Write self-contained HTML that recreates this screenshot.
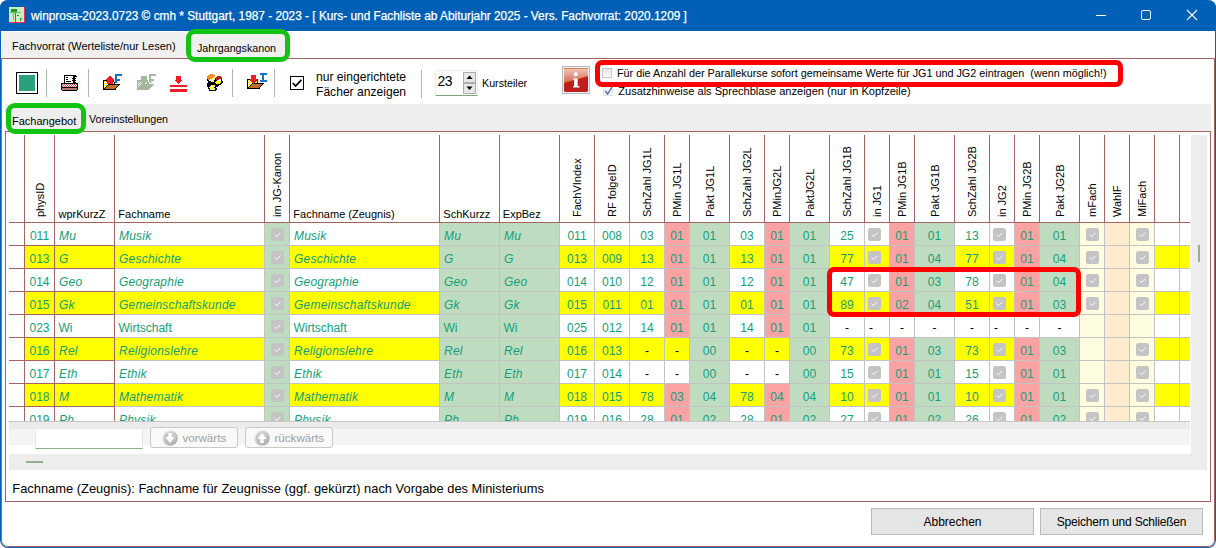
<!DOCTYPE html><html><head><meta charset="utf-8"><style>
*{margin:0;padding:0;box-sizing:border-box}
html,body{width:1216px;height:548px;overflow:hidden;background:#fff;font-family:"Liberation Sans",sans-serif}
.a{position:absolute}
.t{position:absolute;white-space:nowrap;line-height:0}
.t span{display:inline-block;line-height:normal;transform:translateY(-0.905em)}
.vt{position:absolute;white-space:nowrap;transform-origin:0 0;transform:rotate(-90deg);line-height:1;font-size:11px}
</style></head><body><div class="a" style="left:0;top:0;width:1216px;height:548px;border:1px solid #0060b8;border-top:0;border-radius:8px;background:#fff"></div>
<div class="a" style="left:0;top:0;width:1216px;height:31px;background:#0060b8;border-radius:8px 8px 0 0"></div>
<svg class="a" style="left:9px;top:7px" width="16" height="16" viewBox="0 0 16 16" shape-rendering="crispEdges"><rect x="0" y="0" width="15" height="1" fill="#cdeec4"/><rect x="15" y="0" width="1" height="1" fill="#e83050"/><rect x="0" y="1" width="15" height="1" fill="#cdeec4"/><rect x="15" y="1" width="1" height="1" fill="#e83050"/><rect x="0" y="2" width="2" height="1" fill="#cdeec4"/><rect x="2" y="2" width="6" height="1" fill="#1f9a2a"/><rect x="8" y="2" width="7" height="1" fill="#cdeec4"/><rect x="15" y="2" width="1" height="1" fill="#e83050"/><rect x="0" y="3" width="2" height="1" fill="#cdeec4"/><rect x="2" y="3" width="6" height="1" fill="#1f9a2a"/><rect x="8" y="3" width="7" height="1" fill="#cdeec4"/><rect x="15" y="3" width="1" height="1" fill="#e83050"/><rect x="0" y="4" width="2" height="1" fill="#cdeec4"/><rect x="2" y="4" width="6" height="1" fill="#1f9a2a"/><rect x="8" y="4" width="7" height="1" fill="#cdeec4"/><rect x="15" y="4" width="1" height="1" fill="#e83050"/><rect x="0" y="5" width="1" height="1" fill="#cdeec4"/><rect x="1" y="5" width="11" height="1" fill="#6cc06a"/><rect x="12" y="5" width="3" height="1" fill="#cdeec4"/><rect x="15" y="5" width="1" height="1" fill="#e83050"/><rect x="0" y="6" width="4" height="1" fill="#cdeec4"/><rect x="4" y="6" width="1" height="1" fill="#6cc06a"/><rect x="5" y="6" width="1" height="1" fill="#cdeec4"/><rect x="6" y="6" width="1" height="1" fill="#1f9a2a"/><rect x="7" y="6" width="8" height="1" fill="#cdeec4"/><rect x="15" y="6" width="1" height="1" fill="#e83050"/><rect x="0" y="7" width="4" height="1" fill="#cdeec4"/><rect x="4" y="7" width="1" height="1" fill="#6cc06a"/><rect x="5" y="7" width="1" height="1" fill="#cdeec4"/><rect x="6" y="7" width="1" height="1" fill="#1f9a2a"/><rect x="7" y="7" width="8" height="1" fill="#cdeec4"/><rect x="15" y="7" width="1" height="1" fill="#e83050"/><rect x="0" y="8" width="4" height="1" fill="#cdeec4"/><rect x="4" y="8" width="1" height="1" fill="#6cc06a"/><rect x="5" y="8" width="1" height="1" fill="#cdeec4"/><rect x="6" y="8" width="1" height="1" fill="#1f9a2a"/><rect x="7" y="8" width="1" height="1" fill="#cdeec4"/><rect x="8" y="8" width="2" height="1" fill="#1f9a2a"/><rect x="10" y="8" width="5" height="1" fill="#cdeec4"/><rect x="15" y="8" width="1" height="1" fill="#e83050"/><rect x="0" y="9" width="4" height="1" fill="#cdeec4"/><rect x="4" y="9" width="1" height="1" fill="#6cc06a"/><rect x="5" y="9" width="1" height="1" fill="#cdeec4"/><rect x="6" y="9" width="1" height="1" fill="#1f9a2a"/><rect x="7" y="9" width="8" height="1" fill="#cdeec4"/><rect x="15" y="9" width="1" height="1" fill="#e83050"/><rect x="0" y="10" width="4" height="1" fill="#cdeec4"/><rect x="4" y="10" width="1" height="1" fill="#6cc06a"/><rect x="5" y="10" width="1" height="1" fill="#cdeec4"/><rect x="6" y="10" width="1" height="1" fill="#1f9a2a"/><rect x="7" y="10" width="8" height="1" fill="#cdeec4"/><rect x="15" y="10" width="1" height="1" fill="#e83050"/><rect x="0" y="11" width="4" height="1" fill="#cdeec4"/><rect x="4" y="11" width="1" height="1" fill="#6cc06a"/><rect x="5" y="11" width="1" height="1" fill="#cdeec4"/><rect x="6" y="11" width="1" height="1" fill="#1f9a2a"/><rect x="7" y="11" width="4" height="1" fill="#cdeec4"/><rect x="11" y="11" width="2" height="1" fill="#1f9a2a"/><rect x="13" y="11" width="2" height="1" fill="#cdeec4"/><rect x="15" y="11" width="1" height="1" fill="#e83050"/><rect x="0" y="12" width="4" height="1" fill="#cdeec4"/><rect x="4" y="12" width="1" height="1" fill="#6cc06a"/><rect x="5" y="12" width="1" height="1" fill="#cdeec4"/><rect x="6" y="12" width="1" height="1" fill="#1f9a2a"/><rect x="7" y="12" width="4" height="1" fill="#cdeec4"/><rect x="11" y="12" width="1" height="1" fill="#1f9a2a"/><rect x="12" y="12" width="3" height="1" fill="#cdeec4"/><rect x="15" y="12" width="1" height="1" fill="#e83050"/><rect x="0" y="13" width="6" height="1" fill="#cdeec4"/><rect x="6" y="13" width="1" height="1" fill="#1f9a2a"/><rect x="7" y="13" width="4" height="1" fill="#cdeec4"/><rect x="11" y="13" width="1" height="1" fill="#1f9a2a"/><rect x="12" y="13" width="3" height="1" fill="#cdeec4"/><rect x="15" y="13" width="1" height="1" fill="#e83050"/><rect x="0" y="14" width="6" height="1" fill="#cdeec4"/><rect x="6" y="14" width="1" height="1" fill="#1f9a2a"/><rect x="7" y="14" width="8" height="1" fill="#cdeec4"/><rect x="15" y="14" width="1" height="1" fill="#e83050"/><rect x="0" y="15" width="16" height="1" fill="#e83050"/></svg>
<div class="t" style="left:31px;top:20px;font-size:11.85px;color:#fff;-webkit-text-stroke:0.25px #fff"><span>winprosa-2023.0723 © cmh * Stuttgart, 1987 - 2023 - [ Kurs- und Fachliste ab Abiturjahr 2025 - Vers. Fachvorrat: 2020.1209 ]</span></div>
<div class="a" style="left:1096px;top:15px;width:10px;height:1px;background:#fff;"></div>
<div class="a" style="left:1141px;top:10px;width:10px;height:10px;border:1px solid #fff;border-radius:2px"></div>
<svg class="a" style="left:1186px;top:9px" width="12" height="12" viewBox="0 0 12 12"><path d="M1 1 L11 11 M11 1 L1 11" stroke="#fff" stroke-width="1.1"/></svg>
<div class="a" style="left:2px;top:32px;width:184px;height:26px;background:#f0f0f0;"></div>
<div class="t" style="left:12px;top:50px;font-size:11px;color:#000;"><span>Fachvorrat (Werteliste/nur Lesen)</span></div>
<div class="a" style="left:191px;top:34px;width:94px;height:23px;background:#f0f0f0;border-radius:4px"></div>
<div class="t" style="left:197px;top:52px;font-size:10.7px;color:#000;"><span>Jahrgangskanon</span></div>
<div class="a" style="left:1px;top:58px;width:1214px;height:489px;border:1px solid #a5645f;border-radius:0 0 7px 7px"></div>
<div class="a" style="left:16px;top:72px;width:22px;height:22px;border:1.5px solid #000;background:#fff"></div>
<div class="a" style="left:19px;top:75px;width:16px;height:16px;background:#2ba07e;"></div>
<div class="a" style="left:46px;top:69px;width:1px;height:28px;background:#a9bba6;"></div>
<div class="a" style="left:88px;top:69px;width:1px;height:28px;background:#a9bba6;"></div>
<div class="a" style="left:232px;top:69px;width:1px;height:28px;background:#a9bba6;"></div>
<div class="a" style="left:274px;top:69px;width:1px;height:28px;background:#a9bba6;"></div>
<div class="a" style="left:421px;top:70px;width:1px;height:28px;background:#a9bba6;"></div>
<svg class="a" style="left:58px;top:72px" width="22" height="19" viewBox="0 0 22 19" shape-rendering="crispEdges"><rect x="6" y="3" width="12" height="1" fill="#000000"/><rect x="6" y="4" width="1" height="1" fill="#000000"/><rect x="7" y="4" width="8" height="1" fill="#ffffff"/><rect x="15" y="4" width="4" height="1" fill="#000000"/><rect x="6" y="5" width="1" height="1" fill="#000000"/><rect x="7" y="5" width="1" height="1" fill="#ffffff"/><rect x="8" y="5" width="2" height="1" fill="#000000"/><rect x="10" y="5" width="3" height="1" fill="#ffffff"/><rect x="13" y="5" width="1" height="1" fill="#e8c8c0"/><rect x="14" y="5" width="1" height="1" fill="#ffffff"/><rect x="15" y="5" width="2" height="1" fill="#000000"/><rect x="6" y="6" width="1" height="1" fill="#000000"/><rect x="7" y="6" width="7" height="1" fill="#ffffff"/><rect x="14" y="6" width="4" height="1" fill="#000000"/><rect x="6" y="7" width="1" height="1" fill="#000000"/><rect x="7" y="7" width="1" height="1" fill="#ffffff"/><rect x="8" y="7" width="2" height="1" fill="#000000"/><rect x="10" y="7" width="5" height="1" fill="#ffffff"/><rect x="15" y="7" width="2" height="1" fill="#000000"/><rect x="6" y="8" width="1" height="1" fill="#000000"/><rect x="7" y="8" width="7" height="1" fill="#ffffff"/><rect x="14" y="8" width="4" height="1" fill="#000000"/><rect x="6" y="9" width="1" height="1" fill="#000000"/><rect x="7" y="9" width="1" height="1" fill="#ffffff"/><rect x="8" y="9" width="5" height="1" fill="#000000"/><rect x="13" y="9" width="2" height="1" fill="#ffffff"/><rect x="15" y="9" width="2" height="1" fill="#000000"/><rect x="6" y="10" width="1" height="1" fill="#000000"/><rect x="7" y="10" width="8" height="1" fill="#ffffff"/><rect x="15" y="10" width="3" height="1" fill="#000000"/><rect x="3" y="11" width="17" height="1" fill="#000000"/><rect x="3" y="12" width="1" height="1" fill="#000000"/><rect x="4" y="12" width="1" height="1" fill="#c8504a"/><rect x="5" y="12" width="1" height="1" fill="#ffffff"/><rect x="6" y="12" width="1" height="1" fill="#c8504a"/><rect x="7" y="12" width="1" height="1" fill="#ffffff"/><rect x="8" y="12" width="1" height="1" fill="#c8504a"/><rect x="9" y="12" width="1" height="1" fill="#ffffff"/><rect x="10" y="12" width="1" height="1" fill="#c8504a"/><rect x="11" y="12" width="1" height="1" fill="#ffffff"/><rect x="12" y="12" width="1" height="1" fill="#c8504a"/><rect x="13" y="12" width="1" height="1" fill="#ffffff"/><rect x="14" y="12" width="1" height="1" fill="#c8504a"/><rect x="15" y="12" width="1" height="1" fill="#ffffff"/><rect x="16" y="12" width="1" height="1" fill="#c8504a"/><rect x="17" y="12" width="1" height="1" fill="#ffffff"/><rect x="18" y="12" width="1" height="1" fill="#c8504a"/><rect x="19" y="12" width="1" height="1" fill="#000000"/><rect x="3" y="13" width="1" height="1" fill="#000000"/><rect x="4" y="13" width="1" height="1" fill="#ffffff"/><rect x="5" y="13" width="1" height="1" fill="#c8504a"/><rect x="6" y="13" width="1" height="1" fill="#ffffff"/><rect x="7" y="13" width="1" height="1" fill="#c8504a"/><rect x="8" y="13" width="1" height="1" fill="#ffffff"/><rect x="9" y="13" width="1" height="1" fill="#c8504a"/><rect x="10" y="13" width="1" height="1" fill="#ffffff"/><rect x="11" y="13" width="1" height="1" fill="#c8504a"/><rect x="12" y="13" width="1" height="1" fill="#ffffff"/><rect x="13" y="13" width="1" height="1" fill="#c8504a"/><rect x="14" y="13" width="1" height="1" fill="#ffffff"/><rect x="15" y="13" width="1" height="1" fill="#c8504a"/><rect x="16" y="13" width="1" height="1" fill="#ffffff"/><rect x="17" y="13" width="1" height="1" fill="#ee1c24"/><rect x="18" y="13" width="1" height="1" fill="#ffffff"/><rect x="19" y="13" width="1" height="1" fill="#000000"/><rect x="3" y="14" width="1" height="1" fill="#000000"/><rect x="4" y="14" width="1" height="1" fill="#c8504a"/><rect x="5" y="14" width="1" height="1" fill="#ffffff"/><rect x="6" y="14" width="1" height="1" fill="#c8504a"/><rect x="7" y="14" width="1" height="1" fill="#ffffff"/><rect x="8" y="14" width="1" height="1" fill="#c8504a"/><rect x="9" y="14" width="1" height="1" fill="#ffffff"/><rect x="10" y="14" width="1" height="1" fill="#c8504a"/><rect x="11" y="14" width="1" height="1" fill="#ffffff"/><rect x="12" y="14" width="1" height="1" fill="#c8504a"/><rect x="13" y="14" width="1" height="1" fill="#ffffff"/><rect x="14" y="14" width="1" height="1" fill="#c8504a"/><rect x="15" y="14" width="1" height="1" fill="#ffffff"/><rect x="16" y="14" width="1" height="1" fill="#c8504a"/><rect x="17" y="14" width="1" height="1" fill="#ffffff"/><rect x="18" y="14" width="1" height="1" fill="#c8504a"/><rect x="19" y="14" width="1" height="1" fill="#000000"/><rect x="3" y="15" width="17" height="1" fill="#000000"/><rect x="3" y="16" width="1" height="1" fill="#000000"/><rect x="4" y="16" width="15" height="1" fill="#b8756b"/><rect x="19" y="16" width="1" height="1" fill="#000000"/><rect x="3" y="17" width="1" height="1" fill="#000000"/><rect x="4" y="17" width="15" height="1" fill="#b8756b"/><rect x="19" y="17" width="1" height="1" fill="#000000"/><rect x="4" y="18" width="15" height="1" fill="#000000"/></svg>
<svg class="a" style="left:100px;top:70px" width="24" height="20" viewBox="0 0 24 20" shape-rendering="crispEdges"><rect x="15" y="4" width="7" height="1" fill="#1c6cd0"/><rect x="15" y="5" width="7" height="1" fill="#1c6cd0"/><rect x="9" y="6" width="2" height="1" fill="#ee1c24"/><rect x="15" y="6" width="2" height="1" fill="#1c6cd0"/><rect x="8" y="7" width="4" height="1" fill="#ee1c24"/><rect x="15" y="7" width="2" height="1" fill="#1c6cd0"/><rect x="7" y="8" width="6" height="1" fill="#ee1c24"/><rect x="15" y="8" width="2" height="1" fill="#1c6cd0"/><rect x="6" y="9" width="8" height="1" fill="#ee1c24"/><rect x="15" y="9" width="5" height="1" fill="#1c6cd0"/><rect x="3" y="10" width="4" height="1" fill="#000000"/><rect x="7" y="10" width="6" height="1" fill="#ee1c24"/><rect x="13" y="10" width="1" height="1" fill="#000000"/><rect x="15" y="10" width="5" height="1" fill="#1c6cd0"/><rect x="3" y="11" width="1" height="1" fill="#000000"/><rect x="4" y="11" width="1" height="1" fill="#ffff00"/><rect x="5" y="11" width="1" height="1" fill="#ffffff"/><rect x="6" y="11" width="7" height="1" fill="#ee1c24"/><rect x="13" y="11" width="1" height="1" fill="#000000"/><rect x="15" y="11" width="2" height="1" fill="#1c6cd0"/><rect x="3" y="12" width="1" height="1" fill="#000000"/><rect x="4" y="12" width="1" height="1" fill="#ffffff"/><rect x="5" y="12" width="1" height="1" fill="#ffff00"/><rect x="6" y="12" width="1" height="1" fill="#ffffff"/><rect x="7" y="12" width="6" height="1" fill="#ee1c24"/><rect x="13" y="12" width="1" height="1" fill="#ffff00"/><rect x="14" y="12" width="1" height="1" fill="#000000"/><rect x="15" y="12" width="2" height="1" fill="#1c6cd0"/><rect x="3" y="13" width="1" height="1" fill="#000000"/><rect x="4" y="13" width="1" height="1" fill="#ffff00"/><rect x="5" y="13" width="1" height="1" fill="#ffffff"/><rect x="6" y="13" width="1" height="1" fill="#ffff00"/><rect x="7" y="13" width="6" height="1" fill="#ee1c24"/><rect x="13" y="13" width="1" height="1" fill="#ffffff"/><rect x="14" y="13" width="1" height="1" fill="#000000"/><rect x="3" y="14" width="1" height="1" fill="#000000"/><rect x="4" y="14" width="1" height="1" fill="#ffffff"/><rect x="5" y="14" width="1" height="1" fill="#ffff00"/><rect x="6" y="14" width="1" height="1" fill="#ffffff"/><rect x="7" y="14" width="1" height="1" fill="#ffff00"/><rect x="8" y="14" width="12" height="1" fill="#000000"/><rect x="3" y="15" width="1" height="1" fill="#000000"/><rect x="4" y="15" width="1" height="1" fill="#ffff00"/><rect x="5" y="15" width="1" height="1" fill="#ffffff"/><rect x="6" y="15" width="1" height="1" fill="#ffff00"/><rect x="7" y="15" width="1" height="1" fill="#000000"/><rect x="8" y="15" width="10" height="1" fill="#c0702a"/><rect x="18" y="15" width="1" height="1" fill="#000000"/><rect x="3" y="16" width="1" height="1" fill="#000000"/><rect x="4" y="16" width="1" height="1" fill="#ffffff"/><rect x="5" y="16" width="1" height="1" fill="#ffff00"/><rect x="6" y="16" width="1" height="1" fill="#000000"/><rect x="7" y="16" width="10" height="1" fill="#c0702a"/><rect x="17" y="16" width="1" height="1" fill="#000000"/><rect x="3" y="17" width="1" height="1" fill="#000000"/><rect x="4" y="17" width="1" height="1" fill="#ffff00"/><rect x="5" y="17" width="1" height="1" fill="#000000"/><rect x="6" y="17" width="10" height="1" fill="#c0702a"/><rect x="16" y="17" width="1" height="1" fill="#000000"/><rect x="3" y="18" width="2" height="1" fill="#000000"/><rect x="5" y="18" width="10" height="1" fill="#c0702a"/><rect x="15" y="18" width="1" height="1" fill="#000000"/><rect x="3" y="19" width="13" height="1" fill="#000000"/></svg>
<svg class="a" style="left:134px;top:70px" width="24" height="20" viewBox="0 0 24 20" shape-rendering="crispEdges"><rect x="15" y="4" width="7" height="1" fill="#a3b89d"/><rect x="15" y="5" width="7" height="1" fill="#a3b89d"/><rect x="7" y="6" width="6" height="1" fill="#a3b89d"/><rect x="15" y="6" width="2" height="1" fill="#a3b89d"/><rect x="7" y="7" width="6" height="1" fill="#a3b89d"/><rect x="15" y="7" width="2" height="1" fill="#a3b89d"/><rect x="7" y="8" width="6" height="1" fill="#a3b89d"/><rect x="15" y="8" width="2" height="1" fill="#a3b89d"/><rect x="7" y="9" width="6" height="1" fill="#a3b89d"/><rect x="15" y="9" width="5" height="1" fill="#a3b89d"/><rect x="3" y="10" width="11" height="1" fill="#a3b89d"/><rect x="15" y="10" width="5" height="1" fill="#a3b89d"/><rect x="3" y="11" width="11" height="1" fill="#a3b89d"/><rect x="15" y="11" width="2" height="1" fill="#a3b89d"/><rect x="3" y="12" width="1" height="1" fill="#a3b89d"/><rect x="4" y="12" width="1" height="1" fill="#ffffff"/><rect x="5" y="12" width="1" height="1" fill="#a3b89d"/><rect x="6" y="12" width="1" height="1" fill="#ffffff"/><rect x="7" y="12" width="5" height="1" fill="#a3b89d"/><rect x="12" y="12" width="1" height="1" fill="#ffffff"/><rect x="13" y="12" width="2" height="1" fill="#a3b89d"/><rect x="16" y="12" width="2" height="1" fill="#a3b89d"/><rect x="3" y="13" width="2" height="1" fill="#a3b89d"/><rect x="5" y="13" width="1" height="1" fill="#ffffff"/><rect x="6" y="13" width="1" height="1" fill="#a3b89d"/><rect x="7" y="13" width="1" height="1" fill="#ffffff"/><rect x="8" y="13" width="3" height="1" fill="#a3b89d"/><rect x="11" y="13" width="1" height="1" fill="#ffffff"/><rect x="12" y="13" width="3" height="1" fill="#a3b89d"/><rect x="3" y="14" width="1" height="1" fill="#a3b89d"/><rect x="4" y="14" width="1" height="1" fill="#ffffff"/><rect x="5" y="14" width="1" height="1" fill="#a3b89d"/><rect x="6" y="14" width="1" height="1" fill="#ffffff"/><rect x="7" y="14" width="13" height="1" fill="#a3b89d"/><rect x="3" y="15" width="2" height="1" fill="#a3b89d"/><rect x="5" y="15" width="1" height="1" fill="#ffffff"/><rect x="6" y="15" width="13" height="1" fill="#a3b89d"/><rect x="3" y="16" width="1" height="1" fill="#a3b89d"/><rect x="4" y="16" width="1" height="1" fill="#ffffff"/><rect x="5" y="16" width="13" height="1" fill="#a3b89d"/><rect x="3" y="17" width="14" height="1" fill="#a3b89d"/><rect x="3" y="18" width="13" height="1" fill="#a3b89d"/><rect x="3" y="19" width="12" height="1" fill="#a3b89d"/></svg>
<svg class="a" style="left:166px;top:72px" width="22" height="20" viewBox="0 0 22 20" shape-rendering="crispEdges"><rect x="10" y="4" width="5" height="1" fill="#ee1c24"/><rect x="10" y="5" width="5" height="1" fill="#ee1c24"/><rect x="10" y="6" width="5" height="1" fill="#ee1c24"/><rect x="10" y="7" width="5" height="1" fill="#ee1c24"/><rect x="9" y="8" width="7" height="1" fill="#ee1c24"/><rect x="10" y="9" width="5" height="1" fill="#ee1c24"/><rect x="11" y="10" width="3" height="1" fill="#ee1c24"/><rect x="12" y="11" width="1" height="1" fill="#ee1c24"/><rect x="4" y="13" width="17" height="1" fill="#ee1c24"/><rect x="4" y="14" width="17" height="1" fill="#ee1c24"/><rect x="4" y="17" width="17" height="1" fill="#ee1c24"/><rect x="4" y="18" width="17" height="1" fill="#ee1c24"/><rect x="4" y="19" width="17" height="1" fill="#ee1c24"/></svg>
<svg class="a" style="left:202px;top:70px" width="22" height="21" viewBox="0 0 22 21" shape-rendering="crispEdges"><rect x="8" y="4" width="4" height="1" fill="#f7901e"/><rect x="6" y="5" width="7" height="1" fill="#f7901e"/><rect x="5" y="6" width="8" height="1" fill="#f7901e"/><rect x="15" y="6" width="4" height="1" fill="#b8201c"/><rect x="5" y="7" width="6" height="1" fill="#f7901e"/><rect x="11" y="7" width="1" height="1" fill="#ffff00"/><rect x="12" y="7" width="1" height="1" fill="#ffffff"/><rect x="14" y="7" width="6" height="1" fill="#b8201c"/><rect x="5" y="8" width="5" height="1" fill="#f7901e"/><rect x="10" y="8" width="1" height="1" fill="#ffff00"/><rect x="11" y="8" width="1" height="1" fill="#ffffff"/><rect x="12" y="8" width="1" height="1" fill="#ffff00"/><rect x="13" y="8" width="1" height="1" fill="#000000"/><rect x="14" y="8" width="6" height="1" fill="#b8201c"/><rect x="5" y="9" width="1" height="1" fill="#000000"/><rect x="6" y="9" width="2" height="1" fill="#f7901e"/><rect x="8" y="9" width="1" height="1" fill="#ffffff"/><rect x="9" y="9" width="1" height="1" fill="#ffff00"/><rect x="10" y="9" width="1" height="1" fill="#ffffff"/><rect x="11" y="9" width="1" height="1" fill="#ffff00"/><rect x="12" y="9" width="1" height="1" fill="#ffffff"/><rect x="13" y="9" width="1" height="1" fill="#000000"/><rect x="14" y="9" width="3" height="1" fill="#b8201c"/><rect x="17" y="9" width="1" height="1" fill="#ffff00"/><rect x="18" y="9" width="1" height="1" fill="#ffffff"/><rect x="19" y="9" width="1" height="1" fill="#000000"/><rect x="5" y="10" width="2" height="1" fill="#000000"/><rect x="7" y="10" width="1" height="1" fill="#ffff00"/><rect x="8" y="10" width="1" height="1" fill="#ffffff"/><rect x="9" y="10" width="1" height="1" fill="#ffff00"/><rect x="10" y="10" width="1" height="1" fill="#ffffff"/><rect x="11" y="10" width="1" height="1" fill="#ffff00"/><rect x="12" y="10" width="3" height="1" fill="#000000"/><rect x="15" y="10" width="1" height="1" fill="#ffff00"/><rect x="16" y="10" width="1" height="1" fill="#ffffff"/><rect x="17" y="10" width="1" height="1" fill="#ffff00"/><rect x="18" y="10" width="1" height="1" fill="#ffffff"/><rect x="19" y="10" width="1" height="1" fill="#000000"/><rect x="6" y="11" width="3" height="1" fill="#000000"/><rect x="9" y="11" width="1" height="1" fill="#ffffff"/><rect x="10" y="11" width="1" height="1" fill="#ffff00"/><rect x="11" y="11" width="1" height="1" fill="#ffffff"/><rect x="12" y="11" width="2" height="1" fill="#000000"/><rect x="14" y="11" width="1" height="1" fill="#ffff00"/><rect x="15" y="11" width="1" height="1" fill="#ffffff"/><rect x="16" y="11" width="1" height="1" fill="#ffff00"/><rect x="17" y="11" width="1" height="1" fill="#ffffff"/><rect x="18" y="11" width="1" height="1" fill="#ffff00"/><rect x="19" y="11" width="2" height="1" fill="#000000"/><rect x="6" y="12" width="7" height="1" fill="#000000"/><rect x="13" y="12" width="1" height="1" fill="#ffffff"/><rect x="14" y="12" width="1" height="1" fill="#ffff00"/><rect x="15" y="12" width="1" height="1" fill="#ffffff"/><rect x="16" y="12" width="1" height="1" fill="#ffff00"/><rect x="17" y="12" width="1" height="1" fill="#ffffff"/><rect x="18" y="12" width="1" height="1" fill="#ffff00"/><rect x="19" y="12" width="2" height="1" fill="#000000"/><rect x="5" y="13" width="9" height="1" fill="#000000"/><rect x="14" y="13" width="1" height="1" fill="#ffff00"/><rect x="15" y="13" width="1" height="1" fill="#ffffff"/><rect x="16" y="13" width="1" height="1" fill="#ffff00"/><rect x="17" y="13" width="1" height="1" fill="#ffffff"/><rect x="18" y="13" width="2" height="1" fill="#000000"/><rect x="5" y="14" width="14" height="1" fill="#000000"/><rect x="5" y="15" width="4" height="1" fill="#000000"/><rect x="9" y="15" width="1" height="1" fill="#ffffff"/><rect x="10" y="15" width="1" height="1" fill="#ffff00"/><rect x="11" y="15" width="1" height="1" fill="#ffffff"/><rect x="12" y="15" width="1" height="1" fill="#ffff00"/><rect x="13" y="15" width="4" height="1" fill="#000000"/><rect x="5" y="16" width="3" height="1" fill="#000000"/><rect x="8" y="16" width="1" height="1" fill="#ffffff"/><rect x="9" y="16" width="1" height="1" fill="#ffff00"/><rect x="10" y="16" width="1" height="1" fill="#ffffff"/><rect x="11" y="16" width="1" height="1" fill="#ffff00"/><rect x="12" y="16" width="1" height="1" fill="#ffffff"/><rect x="13" y="16" width="3" height="1" fill="#000000"/><rect x="6" y="17" width="1" height="1" fill="#000000"/><rect x="7" y="17" width="1" height="1" fill="#ffffff"/><rect x="8" y="17" width="1" height="1" fill="#ffff00"/><rect x="9" y="17" width="1" height="1" fill="#ffffff"/><rect x="10" y="17" width="1" height="1" fill="#ffff00"/><rect x="11" y="17" width="1" height="1" fill="#ffffff"/><rect x="12" y="17" width="2" height="1" fill="#000000"/><rect x="6" y="18" width="2" height="1" fill="#000000"/><rect x="8" y="18" width="1" height="1" fill="#ffff00"/><rect x="9" y="18" width="1" height="1" fill="#ffffff"/><rect x="10" y="18" width="1" height="1" fill="#ffff00"/><rect x="11" y="18" width="1" height="1" fill="#ffffff"/><rect x="12" y="18" width="1" height="1" fill="#ffff00"/><rect x="13" y="18" width="2" height="1" fill="#000000"/><rect x="7" y="19" width="1" height="1" fill="#000000"/><rect x="8" y="19" width="1" height="1" fill="#ffffff"/><rect x="9" y="19" width="1" height="1" fill="#ffff00"/><rect x="10" y="19" width="1" height="1" fill="#ffffff"/><rect x="11" y="19" width="1" height="1" fill="#ffff00"/><rect x="12" y="19" width="1" height="1" fill="#ffffff"/><rect x="13" y="19" width="2" height="1" fill="#000000"/><rect x="7" y="20" width="7" height="1" fill="#000000"/></svg>
<svg class="a" style="left:244px;top:68px" width="26" height="21" viewBox="0 0 26 21" shape-rendering="crispEdges"><rect x="16" y="5" width="7" height="1" fill="#1c6cd0"/><rect x="16" y="6" width="7" height="1" fill="#1c6cd0"/><rect x="7" y="7" width="5" height="1" fill="#ee1c24"/><rect x="18" y="7" width="2" height="1" fill="#1c6cd0"/><rect x="7" y="8" width="5" height="1" fill="#ee1c24"/><rect x="18" y="8" width="2" height="1" fill="#1c6cd0"/><rect x="7" y="9" width="5" height="1" fill="#ee1c24"/><rect x="18" y="9" width="2" height="1" fill="#1c6cd0"/><rect x="7" y="10" width="5" height="1" fill="#ee1c24"/><rect x="18" y="10" width="2" height="1" fill="#1c6cd0"/><rect x="3" y="11" width="3" height="1" fill="#000000"/><rect x="6" y="11" width="7" height="1" fill="#ee1c24"/><rect x="13" y="11" width="1" height="1" fill="#000000"/><rect x="18" y="11" width="2" height="1" fill="#1c6cd0"/><rect x="3" y="12" width="1" height="1" fill="#000000"/><rect x="4" y="12" width="1" height="1" fill="#ffff00"/><rect x="5" y="12" width="1" height="1" fill="#ffffff"/><rect x="6" y="12" width="7" height="1" fill="#ee1c24"/><rect x="13" y="12" width="1" height="1" fill="#000000"/><rect x="16" y="12" width="7" height="1" fill="#1c6cd0"/><rect x="3" y="13" width="1" height="1" fill="#000000"/><rect x="4" y="13" width="1" height="1" fill="#ffffff"/><rect x="5" y="13" width="1" height="1" fill="#ffff00"/><rect x="6" y="13" width="1" height="1" fill="#ffffff"/><rect x="7" y="13" width="5" height="1" fill="#ee1c24"/><rect x="12" y="13" width="1" height="1" fill="#ffff00"/><rect x="13" y="13" width="1" height="1" fill="#000000"/><rect x="16" y="13" width="7" height="1" fill="#1c6cd0"/><rect x="3" y="14" width="1" height="1" fill="#000000"/><rect x="4" y="14" width="1" height="1" fill="#ffff00"/><rect x="5" y="14" width="1" height="1" fill="#ffffff"/><rect x="6" y="14" width="1" height="1" fill="#ffff00"/><rect x="7" y="14" width="1" height="1" fill="#ffffff"/><rect x="8" y="14" width="3" height="1" fill="#ee1c24"/><rect x="11" y="14" width="1" height="1" fill="#ffffff"/><rect x="12" y="14" width="1" height="1" fill="#ffff00"/><rect x="13" y="14" width="1" height="1" fill="#000000"/><rect x="3" y="15" width="1" height="1" fill="#000000"/><rect x="4" y="15" width="1" height="1" fill="#ffffff"/><rect x="5" y="15" width="1" height="1" fill="#ffff00"/><rect x="6" y="15" width="1" height="1" fill="#ffffff"/><rect x="7" y="15" width="1" height="1" fill="#ffff00"/><rect x="8" y="15" width="1" height="1" fill="#000000"/><rect x="9" y="15" width="1" height="1" fill="#ee1c24"/><rect x="10" y="15" width="10" height="1" fill="#000000"/><rect x="3" y="16" width="1" height="1" fill="#000000"/><rect x="4" y="16" width="1" height="1" fill="#ffff00"/><rect x="5" y="16" width="1" height="1" fill="#ffffff"/><rect x="6" y="16" width="1" height="1" fill="#ffff00"/><rect x="7" y="16" width="1" height="1" fill="#000000"/><rect x="8" y="16" width="10" height="1" fill="#c0702a"/><rect x="18" y="16" width="1" height="1" fill="#000000"/><rect x="3" y="17" width="1" height="1" fill="#000000"/><rect x="4" y="17" width="1" height="1" fill="#ffffff"/><rect x="5" y="17" width="1" height="1" fill="#ffff00"/><rect x="6" y="17" width="1" height="1" fill="#000000"/><rect x="7" y="17" width="10" height="1" fill="#c0702a"/><rect x="17" y="17" width="1" height="1" fill="#000000"/><rect x="3" y="18" width="1" height="1" fill="#000000"/><rect x="4" y="18" width="1" height="1" fill="#ffff00"/><rect x="5" y="18" width="1" height="1" fill="#000000"/><rect x="6" y="18" width="10" height="1" fill="#c0702a"/><rect x="16" y="18" width="1" height="1" fill="#000000"/><rect x="3" y="19" width="2" height="1" fill="#000000"/><rect x="5" y="19" width="10" height="1" fill="#c0702a"/><rect x="15" y="19" width="1" height="1" fill="#000000"/><rect x="3" y="20" width="13" height="1" fill="#000000"/></svg>
<div class="a" style="left:290px;top:76px;width:14px;height:14px;border:1px solid #000;background:#fff"></div>
<svg class="a" style="left:291px;top:77px" width="12" height="12" viewBox="0 0 12 12"><path d="M1.8 6 L4.6 9 L10.4 2.8" stroke="#000" stroke-width="1.8" fill="none"/></svg>
<div class="t" style="left:316px;top:81px;font-size:12.1px;color:#000;"><span>nur eingerichtete</span></div>
<div class="t" style="left:316px;top:95.5px;font-size:12.1px;color:#000;"><span>Fächer anzeigen</span></div>
<div class="a" style="left:435px;top:70px;width:43px;height:26px;border:1px solid #ececec;border-bottom:1px solid #7fa37f;background:#fff;border-radius:3px 3px 0 0"></div>
<div class="t" style="left:437.5px;top:86.3px;font-size:14px;color:#000;letter-spacing:-0.6px"><span>23</span></div>
<div class="a" style="left:463px;top:72px;width:13px;height:11px;border:1px solid #adadad;background:#e7e7e7"></div>
<div class="a" style="left:463px;top:83px;width:13px;height:11px;border:1px solid #adadad;background:#e7e7e7"></div>
<svg class="a" style="left:466px;top:75px" width="7" height="5"><path d="M0.5 4 L3.5 0.5 L6.5 4 Z" fill="#000"/></svg>
<svg class="a" style="left:466px;top:86px" width="7" height="5"><path d="M0.5 0.5 L3.5 4 L6.5 0.5 Z" fill="#000"/></svg>
<div class="t" style="left:482px;top:87px;font-size:10.7px;color:#000;"><span>Kursteiler</span></div>
<div class="a" style="left:562px;top:66px;width:28px;height:28px;border:1px solid #b9b9b9;background:#f3f3f3"></div>
<svg class="a" style="left:564px;top:68px" width="24" height="24" viewBox="0 0 24 24">
<defs><linearGradient id="ig" x1="0" y1="0" x2="0" y2="1"><stop offset="0" stop-color="#f4c8b8"/><stop offset="1" stop-color="#d46a5a"/></linearGradient></defs>
<rect x="0" y="0" width="24" height="24" rx="1.5" fill="#bf1e1e"/>
<path d="M1.5 0 H22.5 Q24 0 24 1.5 V8 L0 14.5 V1.5 Q0 0 1.5 0 Z" fill="url(#ig)"/>
<path d="M0 14.5 L24 8" stroke="#e09030" stroke-width="0.9" stroke-dasharray="1.2 0.8" fill="none"/>
<rect x="0" y="0" width="24" height="0.8" fill="#c87040"/>
<circle cx="11.8" cy="6.3" r="2.1" fill="#fff"/><path d="M9 10.4 H13.7 V18 H15.4 V19.6 H9 V18 H10 V11.6 H9 Z" fill="#fff"/>
</svg>
<div class="a" style="left:602px;top:68px;width:10px;height:10px;border:1px solid #c8c8c8;background:linear-gradient(#e6e6e6,#fafafa)"></div>
<div class="t" style="left:617px;top:77px;font-size:10.8px;color:#000;"><span>Für die Anzahl der Parallekurse sofort gemeinsame Werte für JG1 und JG2 eintragen&nbsp; (wenn möglich!)</span></div>
<div class="a" style="left:603px;top:86px;width:10px;height:10px;border:1px solid #e4e4e4;background:#f2f2f2"></div>
<svg class="a" style="left:603px;top:85px" width="11" height="11"><path d="M2.2 5.8 L4.6 9 L9 2" stroke="#4a68b8" stroke-width="1.4" fill="none"/></svg>
<div class="t" style="left:618.3px;top:95px;font-size:11.05px;color:#000;"><span>Zusatzhinweise als Sprechblase anzeigen (nur in Kopfzeile)</span></div>
<div class="a" style="left:5px;top:104px;width:1206px;height:27px;background:#eeeeee;"></div>
<div class="t" style="left:12px;top:125px;font-size:11px;color:#000;"><span>Fachangebot</span></div>
<div class="t" style="left:89px;top:123.3px;font-size:10.7px;color:#000;"><span>Voreinstellungen</span></div>
<div class="a" style="left:5px;top:131px;width:1206px;height:371px;border:1px solid #a5645f;"></div>
<div class="a" style="left:9px;top:135px;width:1198px;height:335px;background:#ededed;"></div>
<div class="a" style="left:9px;top:135px;width:1182px;height:319px;background:#fff;border-radius:0 0 4px 0"></div>
<div class="a" style="left:24px;top:135px;width:1px;height:87px;background:#a5645f;"></div>
<div class="a" style="left:54px;top:135px;width:1px;height:87px;background:#a5645f;"></div>
<div class="a" style="left:114px;top:135px;width:1px;height:87px;background:#a5645f;"></div>
<div class="a" style="left:264px;top:135px;width:1px;height:87px;background:#a5645f;"></div>
<div class="a" style="left:289px;top:135px;width:1px;height:87px;background:#a5645f;"></div>
<div class="a" style="left:439px;top:135px;width:1px;height:87px;background:#a5645f;"></div>
<div class="a" style="left:499px;top:135px;width:1px;height:87px;background:#a5645f;"></div>
<div class="a" style="left:559px;top:135px;width:1px;height:87px;background:#a5645f;"></div>
<div class="a" style="left:594px;top:135px;width:1px;height:87px;background:#a5645f;"></div>
<div class="a" style="left:629px;top:135px;width:1px;height:87px;background:#a5645f;"></div>
<div class="a" style="left:664px;top:135px;width:1px;height:87px;background:#a5645f;"></div>
<div class="a" style="left:689px;top:135px;width:1px;height:87px;background:#a5645f;"></div>
<div class="a" style="left:729px;top:135px;width:1px;height:87px;background:#a5645f;"></div>
<div class="a" style="left:764px;top:135px;width:1px;height:87px;background:#a5645f;"></div>
<div class="a" style="left:789px;top:135px;width:1px;height:87px;background:#a5645f;"></div>
<div class="a" style="left:829px;top:135px;width:1px;height:87px;background:#a5645f;"></div>
<div class="a" style="left:864px;top:135px;width:1px;height:87px;background:#a5645f;"></div>
<div class="a" style="left:889px;top:135px;width:1px;height:87px;background:#a5645f;"></div>
<div class="a" style="left:914px;top:135px;width:1px;height:87px;background:#a5645f;"></div>
<div class="a" style="left:954px;top:135px;width:1px;height:87px;background:#a5645f;"></div>
<div class="a" style="left:989px;top:135px;width:1px;height:87px;background:#a5645f;"></div>
<div class="a" style="left:1014px;top:135px;width:1px;height:87px;background:#a5645f;"></div>
<div class="a" style="left:1039px;top:135px;width:1px;height:87px;background:#a5645f;"></div>
<div class="a" style="left:1079px;top:135px;width:1px;height:87px;background:#a5645f;"></div>
<div class="a" style="left:1104px;top:135px;width:1px;height:87px;background:#a5645f;"></div>
<div class="a" style="left:1129px;top:135px;width:1px;height:87px;background:#a5645f;"></div>
<div class="a" style="left:1154px;top:135px;width:1px;height:87px;background:#a5645f;"></div>
<div class="a" style="left:1179px;top:135px;width:1px;height:87px;background:#a5645f;"></div>
<div class="a" style="left:9px;top:222px;width:1181px;height:1px;background:#a5645f;"></div>
<div class="a" style="left:265px;top:223px;width:24px;height:22px;background:#c0dcc0;"></div>
<div class="a" style="left:440px;top:223px;width:59px;height:22px;background:#c0dcc0;"></div>
<div class="a" style="left:500px;top:223px;width:59px;height:22px;background:#c0dcc0;"></div>
<div class="a" style="left:665px;top:223px;width:24px;height:22px;background:#fba3a3;"></div>
<div class="a" style="left:690px;top:223px;width:39px;height:22px;background:#c0dcc0;"></div>
<div class="a" style="left:765px;top:223px;width:24px;height:22px;background:#fba3a3;"></div>
<div class="a" style="left:790px;top:223px;width:39px;height:22px;background:#c0dcc0;"></div>
<div class="a" style="left:890px;top:223px;width:24px;height:22px;background:#fba3a3;"></div>
<div class="a" style="left:915px;top:223px;width:39px;height:22px;background:#c0dcc0;"></div>
<div class="a" style="left:1015px;top:223px;width:24px;height:22px;background:#fba3a3;"></div>
<div class="a" style="left:1040px;top:223px;width:39px;height:22px;background:#c0dcc0;"></div>
<div class="a" style="left:1080px;top:223px;width:24px;height:22px;background:#fffde0;"></div>
<div class="a" style="left:1105px;top:223px;width:24px;height:22px;background:#ffebcd;"></div>
<div class="a" style="left:1130px;top:223px;width:24px;height:22px;background:#fffde0;"></div>
<div class="a" style="left:25px;top:246px;width:29px;height:22px;background:#ffff00;"></div>
<div class="a" style="left:55px;top:246px;width:59px;height:22px;background:#ffff00;"></div>
<div class="a" style="left:115px;top:246px;width:149px;height:22px;background:#ffff00;"></div>
<div class="a" style="left:265px;top:246px;width:24px;height:22px;background:#c0dcc0;"></div>
<div class="a" style="left:290px;top:246px;width:149px;height:22px;background:#ffff00;"></div>
<div class="a" style="left:440px;top:246px;width:59px;height:22px;background:#c0dcc0;"></div>
<div class="a" style="left:500px;top:246px;width:59px;height:22px;background:#c0dcc0;"></div>
<div class="a" style="left:560px;top:246px;width:34px;height:22px;background:#ffff00;"></div>
<div class="a" style="left:595px;top:246px;width:34px;height:22px;background:#ffff00;"></div>
<div class="a" style="left:630px;top:246px;width:34px;height:22px;background:#ffff00;"></div>
<div class="a" style="left:665px;top:246px;width:24px;height:22px;background:#fba3a3;"></div>
<div class="a" style="left:690px;top:246px;width:39px;height:22px;background:#c0dcc0;"></div>
<div class="a" style="left:730px;top:246px;width:34px;height:22px;background:#ffff00;"></div>
<div class="a" style="left:765px;top:246px;width:24px;height:22px;background:#fba3a3;"></div>
<div class="a" style="left:790px;top:246px;width:39px;height:22px;background:#c0dcc0;"></div>
<div class="a" style="left:830px;top:246px;width:34px;height:22px;background:#ffff00;"></div>
<div class="a" style="left:865px;top:246px;width:24px;height:22px;background:#ffff00;"></div>
<div class="a" style="left:890px;top:246px;width:24px;height:22px;background:#fba3a3;"></div>
<div class="a" style="left:915px;top:246px;width:39px;height:22px;background:#c0dcc0;"></div>
<div class="a" style="left:955px;top:246px;width:34px;height:22px;background:#ffff00;"></div>
<div class="a" style="left:990px;top:246px;width:24px;height:22px;background:#ffff00;"></div>
<div class="a" style="left:1015px;top:246px;width:24px;height:22px;background:#fba3a3;"></div>
<div class="a" style="left:1040px;top:246px;width:39px;height:22px;background:#c0dcc0;"></div>
<div class="a" style="left:1080px;top:246px;width:24px;height:22px;background:#fffde0;"></div>
<div class="a" style="left:1105px;top:246px;width:24px;height:22px;background:#ffebcd;"></div>
<div class="a" style="left:1130px;top:246px;width:24px;height:22px;background:#fffde0;"></div>
<div class="a" style="left:1155px;top:246px;width:24px;height:22px;background:#ffff00;"></div>
<div class="a" style="left:1180px;top:246px;width:10px;height:22px;background:#ffff00;"></div>
<div class="a" style="left:265px;top:269px;width:24px;height:22px;background:#c0dcc0;"></div>
<div class="a" style="left:440px;top:269px;width:59px;height:22px;background:#c0dcc0;"></div>
<div class="a" style="left:500px;top:269px;width:59px;height:22px;background:#c0dcc0;"></div>
<div class="a" style="left:665px;top:269px;width:24px;height:22px;background:#fba3a3;"></div>
<div class="a" style="left:690px;top:269px;width:39px;height:22px;background:#c0dcc0;"></div>
<div class="a" style="left:765px;top:269px;width:24px;height:22px;background:#fba3a3;"></div>
<div class="a" style="left:790px;top:269px;width:39px;height:22px;background:#c0dcc0;"></div>
<div class="a" style="left:890px;top:269px;width:24px;height:22px;background:#fba3a3;"></div>
<div class="a" style="left:915px;top:269px;width:39px;height:22px;background:#c0dcc0;"></div>
<div class="a" style="left:1015px;top:269px;width:24px;height:22px;background:#fba3a3;"></div>
<div class="a" style="left:1040px;top:269px;width:39px;height:22px;background:#c0dcc0;"></div>
<div class="a" style="left:1080px;top:269px;width:24px;height:22px;background:#fffde0;"></div>
<div class="a" style="left:1105px;top:269px;width:24px;height:22px;background:#ffebcd;"></div>
<div class="a" style="left:1130px;top:269px;width:24px;height:22px;background:#fffde0;"></div>
<div class="a" style="left:25px;top:292px;width:29px;height:22px;background:#ffff00;"></div>
<div class="a" style="left:55px;top:292px;width:59px;height:22px;background:#ffff00;"></div>
<div class="a" style="left:115px;top:292px;width:149px;height:22px;background:#ffff00;"></div>
<div class="a" style="left:265px;top:292px;width:24px;height:22px;background:#c0dcc0;"></div>
<div class="a" style="left:290px;top:292px;width:149px;height:22px;background:#ffff00;"></div>
<div class="a" style="left:440px;top:292px;width:59px;height:22px;background:#c0dcc0;"></div>
<div class="a" style="left:500px;top:292px;width:59px;height:22px;background:#c0dcc0;"></div>
<div class="a" style="left:560px;top:292px;width:34px;height:22px;background:#ffff00;"></div>
<div class="a" style="left:595px;top:292px;width:34px;height:22px;background:#ffff00;"></div>
<div class="a" style="left:630px;top:292px;width:34px;height:22px;background:#ffff00;"></div>
<div class="a" style="left:665px;top:292px;width:24px;height:22px;background:#fba3a3;"></div>
<div class="a" style="left:690px;top:292px;width:39px;height:22px;background:#c0dcc0;"></div>
<div class="a" style="left:730px;top:292px;width:34px;height:22px;background:#ffff00;"></div>
<div class="a" style="left:765px;top:292px;width:24px;height:22px;background:#fba3a3;"></div>
<div class="a" style="left:790px;top:292px;width:39px;height:22px;background:#c0dcc0;"></div>
<div class="a" style="left:830px;top:292px;width:34px;height:22px;background:#ffff00;"></div>
<div class="a" style="left:865px;top:292px;width:24px;height:22px;background:#ffff00;"></div>
<div class="a" style="left:890px;top:292px;width:24px;height:22px;background:#fba3a3;"></div>
<div class="a" style="left:915px;top:292px;width:39px;height:22px;background:#c0dcc0;"></div>
<div class="a" style="left:955px;top:292px;width:34px;height:22px;background:#ffff00;"></div>
<div class="a" style="left:990px;top:292px;width:24px;height:22px;background:#ffff00;"></div>
<div class="a" style="left:1015px;top:292px;width:24px;height:22px;background:#fba3a3;"></div>
<div class="a" style="left:1040px;top:292px;width:39px;height:22px;background:#c0dcc0;"></div>
<div class="a" style="left:1080px;top:292px;width:24px;height:22px;background:#fffde0;"></div>
<div class="a" style="left:1105px;top:292px;width:24px;height:22px;background:#ffebcd;"></div>
<div class="a" style="left:1130px;top:292px;width:24px;height:22px;background:#fffde0;"></div>
<div class="a" style="left:1155px;top:292px;width:24px;height:22px;background:#ffff00;"></div>
<div class="a" style="left:1180px;top:292px;width:10px;height:22px;background:#ffff00;"></div>
<div class="a" style="left:265px;top:315px;width:24px;height:22px;background:#c0dcc0;"></div>
<div class="a" style="left:440px;top:315px;width:59px;height:22px;background:#c0dcc0;"></div>
<div class="a" style="left:500px;top:315px;width:59px;height:22px;background:#c0dcc0;"></div>
<div class="a" style="left:665px;top:315px;width:24px;height:22px;background:#fba3a3;"></div>
<div class="a" style="left:690px;top:315px;width:39px;height:22px;background:#c0dcc0;"></div>
<div class="a" style="left:765px;top:315px;width:24px;height:22px;background:#fba3a3;"></div>
<div class="a" style="left:790px;top:315px;width:39px;height:22px;background:#c0dcc0;"></div>
<div class="a" style="left:1080px;top:315px;width:24px;height:22px;background:#fffde0;"></div>
<div class="a" style="left:1105px;top:315px;width:24px;height:22px;background:#ffebcd;"></div>
<div class="a" style="left:1130px;top:315px;width:24px;height:22px;background:#fffde0;"></div>
<div class="a" style="left:25px;top:338px;width:29px;height:22px;background:#ffff00;"></div>
<div class="a" style="left:55px;top:338px;width:59px;height:22px;background:#ffff00;"></div>
<div class="a" style="left:115px;top:338px;width:149px;height:22px;background:#ffff00;"></div>
<div class="a" style="left:265px;top:338px;width:24px;height:22px;background:#c0dcc0;"></div>
<div class="a" style="left:290px;top:338px;width:149px;height:22px;background:#ffff00;"></div>
<div class="a" style="left:440px;top:338px;width:59px;height:22px;background:#c0dcc0;"></div>
<div class="a" style="left:500px;top:338px;width:59px;height:22px;background:#c0dcc0;"></div>
<div class="a" style="left:560px;top:338px;width:34px;height:22px;background:#ffff00;"></div>
<div class="a" style="left:595px;top:338px;width:34px;height:22px;background:#ffff00;"></div>
<div class="a" style="left:630px;top:338px;width:34px;height:22px;background:#ffff00;"></div>
<div class="a" style="left:665px;top:338px;width:24px;height:22px;background:#ffff00;"></div>
<div class="a" style="left:690px;top:338px;width:39px;height:22px;background:#c0dcc0;"></div>
<div class="a" style="left:730px;top:338px;width:34px;height:22px;background:#ffff00;"></div>
<div class="a" style="left:765px;top:338px;width:24px;height:22px;background:#ffff00;"></div>
<div class="a" style="left:790px;top:338px;width:39px;height:22px;background:#c0dcc0;"></div>
<div class="a" style="left:830px;top:338px;width:34px;height:22px;background:#ffff00;"></div>
<div class="a" style="left:865px;top:338px;width:24px;height:22px;background:#ffff00;"></div>
<div class="a" style="left:890px;top:338px;width:24px;height:22px;background:#fba3a3;"></div>
<div class="a" style="left:915px;top:338px;width:39px;height:22px;background:#c0dcc0;"></div>
<div class="a" style="left:955px;top:338px;width:34px;height:22px;background:#ffff00;"></div>
<div class="a" style="left:990px;top:338px;width:24px;height:22px;background:#ffff00;"></div>
<div class="a" style="left:1015px;top:338px;width:24px;height:22px;background:#fba3a3;"></div>
<div class="a" style="left:1040px;top:338px;width:39px;height:22px;background:#c0dcc0;"></div>
<div class="a" style="left:1080px;top:338px;width:24px;height:22px;background:#fffde0;"></div>
<div class="a" style="left:1105px;top:338px;width:24px;height:22px;background:#ffebcd;"></div>
<div class="a" style="left:1130px;top:338px;width:24px;height:22px;background:#fffde0;"></div>
<div class="a" style="left:1155px;top:338px;width:24px;height:22px;background:#ffff00;"></div>
<div class="a" style="left:1180px;top:338px;width:10px;height:22px;background:#ffff00;"></div>
<div class="a" style="left:265px;top:361px;width:24px;height:22px;background:#c0dcc0;"></div>
<div class="a" style="left:440px;top:361px;width:59px;height:22px;background:#c0dcc0;"></div>
<div class="a" style="left:500px;top:361px;width:59px;height:22px;background:#c0dcc0;"></div>
<div class="a" style="left:690px;top:361px;width:39px;height:22px;background:#c0dcc0;"></div>
<div class="a" style="left:790px;top:361px;width:39px;height:22px;background:#c0dcc0;"></div>
<div class="a" style="left:890px;top:361px;width:24px;height:22px;background:#fba3a3;"></div>
<div class="a" style="left:915px;top:361px;width:39px;height:22px;background:#c0dcc0;"></div>
<div class="a" style="left:1015px;top:361px;width:24px;height:22px;background:#fba3a3;"></div>
<div class="a" style="left:1040px;top:361px;width:39px;height:22px;background:#c0dcc0;"></div>
<div class="a" style="left:1080px;top:361px;width:24px;height:22px;background:#fffde0;"></div>
<div class="a" style="left:1105px;top:361px;width:24px;height:22px;background:#ffebcd;"></div>
<div class="a" style="left:1130px;top:361px;width:24px;height:22px;background:#fffde0;"></div>
<div class="a" style="left:25px;top:384px;width:29px;height:22px;background:#ffff00;"></div>
<div class="a" style="left:55px;top:384px;width:59px;height:22px;background:#ffff00;"></div>
<div class="a" style="left:115px;top:384px;width:149px;height:22px;background:#ffff00;"></div>
<div class="a" style="left:265px;top:384px;width:24px;height:22px;background:#c0dcc0;"></div>
<div class="a" style="left:290px;top:384px;width:149px;height:22px;background:#ffff00;"></div>
<div class="a" style="left:440px;top:384px;width:59px;height:22px;background:#c0dcc0;"></div>
<div class="a" style="left:500px;top:384px;width:59px;height:22px;background:#c0dcc0;"></div>
<div class="a" style="left:560px;top:384px;width:34px;height:22px;background:#ffff00;"></div>
<div class="a" style="left:595px;top:384px;width:34px;height:22px;background:#ffff00;"></div>
<div class="a" style="left:630px;top:384px;width:34px;height:22px;background:#ffff00;"></div>
<div class="a" style="left:665px;top:384px;width:24px;height:22px;background:#fba3a3;"></div>
<div class="a" style="left:690px;top:384px;width:39px;height:22px;background:#c0dcc0;"></div>
<div class="a" style="left:730px;top:384px;width:34px;height:22px;background:#ffff00;"></div>
<div class="a" style="left:765px;top:384px;width:24px;height:22px;background:#fba3a3;"></div>
<div class="a" style="left:790px;top:384px;width:39px;height:22px;background:#c0dcc0;"></div>
<div class="a" style="left:830px;top:384px;width:34px;height:22px;background:#ffff00;"></div>
<div class="a" style="left:865px;top:384px;width:24px;height:22px;background:#ffff00;"></div>
<div class="a" style="left:890px;top:384px;width:24px;height:22px;background:#fba3a3;"></div>
<div class="a" style="left:915px;top:384px;width:39px;height:22px;background:#c0dcc0;"></div>
<div class="a" style="left:955px;top:384px;width:34px;height:22px;background:#ffff00;"></div>
<div class="a" style="left:990px;top:384px;width:24px;height:22px;background:#ffff00;"></div>
<div class="a" style="left:1015px;top:384px;width:24px;height:22px;background:#fba3a3;"></div>
<div class="a" style="left:1040px;top:384px;width:39px;height:22px;background:#c0dcc0;"></div>
<div class="a" style="left:1080px;top:384px;width:24px;height:22px;background:#fffde0;"></div>
<div class="a" style="left:1105px;top:384px;width:24px;height:22px;background:#ffebcd;"></div>
<div class="a" style="left:1130px;top:384px;width:24px;height:22px;background:#fffde0;"></div>
<div class="a" style="left:1155px;top:384px;width:24px;height:22px;background:#ffff00;"></div>
<div class="a" style="left:1180px;top:384px;width:10px;height:22px;background:#ffff00;"></div>
<div class="a" style="left:265px;top:407px;width:24px;height:22px;background:#c0dcc0;"></div>
<div class="a" style="left:440px;top:407px;width:59px;height:22px;background:#c0dcc0;"></div>
<div class="a" style="left:500px;top:407px;width:59px;height:22px;background:#c0dcc0;"></div>
<div class="a" style="left:665px;top:407px;width:24px;height:22px;background:#fba3a3;"></div>
<div class="a" style="left:690px;top:407px;width:39px;height:22px;background:#c0dcc0;"></div>
<div class="a" style="left:765px;top:407px;width:24px;height:22px;background:#fba3a3;"></div>
<div class="a" style="left:790px;top:407px;width:39px;height:22px;background:#c0dcc0;"></div>
<div class="a" style="left:890px;top:407px;width:24px;height:22px;background:#fba3a3;"></div>
<div class="a" style="left:915px;top:407px;width:39px;height:22px;background:#c0dcc0;"></div>
<div class="a" style="left:1015px;top:407px;width:24px;height:22px;background:#fba3a3;"></div>
<div class="a" style="left:1040px;top:407px;width:39px;height:22px;background:#c0dcc0;"></div>
<div class="a" style="left:1080px;top:407px;width:24px;height:22px;background:#fffde0;"></div>
<div class="a" style="left:1105px;top:407px;width:24px;height:22px;background:#ffebcd;"></div>
<div class="a" style="left:1130px;top:407px;width:24px;height:22px;background:#fffde0;"></div>
<div class="a" style="left:9px;top:245px;width:105px;height:1px;background:#a5645f;"></div>
<div class="a" style="left:114px;top:245px;width:1076px;height:1px;background:#c3c3c3;"></div>
<div class="a" style="left:9px;top:268px;width:105px;height:1px;background:#a5645f;"></div>
<div class="a" style="left:114px;top:268px;width:1076px;height:1px;background:#c3c3c3;"></div>
<div class="a" style="left:9px;top:291px;width:105px;height:1px;background:#a5645f;"></div>
<div class="a" style="left:114px;top:291px;width:1076px;height:1px;background:#c3c3c3;"></div>
<div class="a" style="left:9px;top:314px;width:105px;height:1px;background:#a5645f;"></div>
<div class="a" style="left:114px;top:314px;width:1076px;height:1px;background:#c3c3c3;"></div>
<div class="a" style="left:9px;top:337px;width:105px;height:1px;background:#a5645f;"></div>
<div class="a" style="left:114px;top:337px;width:1076px;height:1px;background:#c3c3c3;"></div>
<div class="a" style="left:9px;top:360px;width:105px;height:1px;background:#a5645f;"></div>
<div class="a" style="left:114px;top:360px;width:1076px;height:1px;background:#c3c3c3;"></div>
<div class="a" style="left:9px;top:383px;width:105px;height:1px;background:#a5645f;"></div>
<div class="a" style="left:114px;top:383px;width:1076px;height:1px;background:#c3c3c3;"></div>
<div class="a" style="left:9px;top:406px;width:105px;height:1px;background:#a5645f;"></div>
<div class="a" style="left:114px;top:406px;width:1076px;height:1px;background:#c3c3c3;"></div>
<div class="a" style="left:9px;top:429px;width:105px;height:1px;background:#a5645f;"></div>
<div class="a" style="left:114px;top:429px;width:1076px;height:1px;background:#c3c3c3;"></div>
<div class="a" style="left:24px;top:223px;width:1px;height:198px;background:#a5645f;"></div>
<div class="a" style="left:54px;top:223px;width:1px;height:198px;background:#a5645f;"></div>
<div class="a" style="left:114px;top:223px;width:1px;height:198px;background:#a5645f;"></div>
<div class="a" style="left:264px;top:223px;width:1px;height:198px;background:#c3c3c3;"></div>
<div class="a" style="left:289px;top:223px;width:1px;height:198px;background:#c3c3c3;"></div>
<div class="a" style="left:439px;top:223px;width:1px;height:198px;background:#c3c3c3;"></div>
<div class="a" style="left:499px;top:223px;width:1px;height:198px;background:#c3c3c3;"></div>
<div class="a" style="left:559px;top:223px;width:1px;height:198px;background:#c3c3c3;"></div>
<div class="a" style="left:594px;top:223px;width:1px;height:198px;background:#c3c3c3;"></div>
<div class="a" style="left:629px;top:223px;width:1px;height:198px;background:#c3c3c3;"></div>
<div class="a" style="left:664px;top:223px;width:1px;height:198px;background:#c3c3c3;"></div>
<div class="a" style="left:689px;top:223px;width:1px;height:198px;background:#c3c3c3;"></div>
<div class="a" style="left:729px;top:223px;width:1px;height:198px;background:#c3c3c3;"></div>
<div class="a" style="left:764px;top:223px;width:1px;height:198px;background:#c3c3c3;"></div>
<div class="a" style="left:789px;top:223px;width:1px;height:198px;background:#c3c3c3;"></div>
<div class="a" style="left:829px;top:223px;width:1px;height:198px;background:#c3c3c3;"></div>
<div class="a" style="left:864px;top:223px;width:1px;height:198px;background:#c3c3c3;"></div>
<div class="a" style="left:889px;top:223px;width:1px;height:198px;background:#c3c3c3;"></div>
<div class="a" style="left:914px;top:223px;width:1px;height:198px;background:#c3c3c3;"></div>
<div class="a" style="left:954px;top:223px;width:1px;height:198px;background:#c3c3c3;"></div>
<div class="a" style="left:989px;top:223px;width:1px;height:198px;background:#c3c3c3;"></div>
<div class="a" style="left:1014px;top:223px;width:1px;height:198px;background:#c3c3c3;"></div>
<div class="a" style="left:1039px;top:223px;width:1px;height:198px;background:#c3c3c3;"></div>
<div class="a" style="left:1079px;top:223px;width:1px;height:198px;background:#c3c3c3;"></div>
<div class="a" style="left:1104px;top:223px;width:1px;height:198px;background:#c3c3c3;"></div>
<div class="a" style="left:1129px;top:223px;width:1px;height:198px;background:#c3c3c3;"></div>
<div class="a" style="left:1154px;top:223px;width:1px;height:198px;background:#c3c3c3;"></div>
<div class="a" style="left:1179px;top:223px;width:1px;height:198px;background:#c3c3c3;"></div>
<div class="t" style="left:25px;width:29px;top:239.5px;font-size:12px;color:#12a07a;text-align:center;"><span>011</span></div>
<div class="t" style="left:59px;top:239.5px;font-size:12px;color:#12a07a;font-style:italic;letter-spacing:0.22px;"><span>Mu</span></div>
<div class="t" style="left:119px;top:239.5px;font-size:12px;color:#12a07a;font-style:italic;letter-spacing:0.22px;"><span>Musik</span></div>
<div class="a" style="left:271px;top:228px"><svg width="13" height="13" viewBox="0 0 13 13" style="display:block"><rect x="0" y="0" width="13" height="13" rx="2.5" fill="#c4c4c4"/><path d="M3.6 6.6 L5.7 8.6 L9.5 4.7" stroke="#fff" stroke-width="1" fill="none"/></svg></div>
<div class="t" style="left:294px;top:239.5px;font-size:12px;color:#12a07a;font-style:italic;letter-spacing:0.22px;"><span>Musik</span></div>
<div class="t" style="left:444px;top:239.5px;font-size:12px;color:#12a07a;font-style:italic;letter-spacing:0.22px;"><span>Mu</span></div>
<div class="t" style="left:504px;top:239.5px;font-size:12px;color:#12a07a;font-style:italic;letter-spacing:0.22px;"><span>Mu</span></div>
<div class="t" style="left:560px;width:34px;top:239.5px;font-size:12px;color:#12a07a;text-align:center;"><span>011</span></div>
<div class="t" style="left:595px;width:34px;top:239.5px;font-size:12px;color:#12a07a;text-align:center;"><span>008</span></div>
<div class="t" style="left:630px;width:34px;top:239.5px;font-size:12px;color:#12a07a;text-align:center;"><span>03</span></div>
<div class="t" style="left:665px;width:24px;top:239.5px;font-size:12px;color:#12a07a;text-align:center;"><span>01</span></div>
<div class="t" style="left:690px;width:39px;top:239.5px;font-size:12px;color:#12a07a;text-align:center;"><span>01</span></div>
<div class="t" style="left:730px;width:34px;top:239.5px;font-size:12px;color:#12a07a;text-align:center;"><span>03</span></div>
<div class="t" style="left:765px;width:24px;top:239.5px;font-size:12px;color:#12a07a;text-align:center;"><span>01</span></div>
<div class="t" style="left:790px;width:39px;top:239.5px;font-size:12px;color:#12a07a;text-align:center;"><span>01</span></div>
<div class="t" style="left:830px;width:34px;top:239.5px;font-size:12px;color:#12a07a;text-align:center;"><span>25</span></div>
<div class="a" style="left:868px;top:228px"><svg width="13" height="13" viewBox="0 0 13 13" style="display:block"><rect x="0" y="0" width="13" height="13" rx="2.5" fill="#c4c4c4"/><path d="M3.6 6.6 L5.7 8.6 L9.5 4.7" stroke="#fff" stroke-width="1" fill="none"/></svg></div>
<div class="t" style="left:890px;width:24px;top:239.5px;font-size:12px;color:#12a07a;text-align:center;"><span>01</span></div>
<div class="t" style="left:915px;width:39px;top:239.5px;font-size:12px;color:#12a07a;text-align:center;"><span>01</span></div>
<div class="t" style="left:955px;width:34px;top:239.5px;font-size:12px;color:#12a07a;text-align:center;"><span>13</span></div>
<div class="a" style="left:993px;top:228px"><svg width="13" height="13" viewBox="0 0 13 13" style="display:block"><rect x="0" y="0" width="13" height="13" rx="2.5" fill="#c4c4c4"/><path d="M3.6 6.6 L5.7 8.6 L9.5 4.7" stroke="#fff" stroke-width="1" fill="none"/></svg></div>
<div class="t" style="left:1015px;width:24px;top:239.5px;font-size:12px;color:#12a07a;text-align:center;"><span>01</span></div>
<div class="t" style="left:1040px;width:39px;top:239.5px;font-size:12px;color:#12a07a;text-align:center;"><span>01</span></div>
<div class="a" style="left:1086px;top:228px"><svg width="13" height="13" viewBox="0 0 13 13" style="display:block"><rect x="0" y="0" width="13" height="13" rx="2.5" fill="#c4c4c4"/><path d="M3.6 6.6 L5.7 8.6 L9.5 4.7" stroke="#fff" stroke-width="1" fill="none"/></svg></div>
<div class="a" style="left:1136px;top:228px"><svg width="13" height="13" viewBox="0 0 13 13" style="display:block"><rect x="0" y="0" width="13" height="13" rx="2.5" fill="#c4c4c4"/><path d="M3.6 6.6 L5.7 8.6 L9.5 4.7" stroke="#fff" stroke-width="1" fill="none"/></svg></div>
<div class="t" style="left:25px;width:29px;top:262.5px;font-size:12px;color:#12a07a;text-align:center;"><span>013</span></div>
<div class="t" style="left:59px;top:262.5px;font-size:12px;color:#12a07a;font-style:italic;letter-spacing:0.22px;"><span>G</span></div>
<div class="t" style="left:119px;top:262.5px;font-size:12px;color:#12a07a;font-style:italic;letter-spacing:0.22px;"><span>Geschichte</span></div>
<div class="a" style="left:271px;top:251px"><svg width="13" height="13" viewBox="0 0 13 13" style="display:block"><rect x="0" y="0" width="13" height="13" rx="2.5" fill="#c4c4c4"/><path d="M3.6 6.6 L5.7 8.6 L9.5 4.7" stroke="#fff" stroke-width="1" fill="none"/></svg></div>
<div class="t" style="left:294px;top:262.5px;font-size:12px;color:#12a07a;font-style:italic;letter-spacing:0.22px;"><span>Geschichte</span></div>
<div class="t" style="left:444px;top:262.5px;font-size:12px;color:#12a07a;font-style:italic;letter-spacing:0.22px;"><span>G</span></div>
<div class="t" style="left:504px;top:262.5px;font-size:12px;color:#12a07a;font-style:italic;letter-spacing:0.22px;"><span>G</span></div>
<div class="t" style="left:560px;width:34px;top:262.5px;font-size:12px;color:#12a07a;text-align:center;"><span>013</span></div>
<div class="t" style="left:595px;width:34px;top:262.5px;font-size:12px;color:#12a07a;text-align:center;"><span>009</span></div>
<div class="t" style="left:630px;width:34px;top:262.5px;font-size:12px;color:#12a07a;text-align:center;"><span>13</span></div>
<div class="t" style="left:665px;width:24px;top:262.5px;font-size:12px;color:#12a07a;text-align:center;"><span>01</span></div>
<div class="t" style="left:690px;width:39px;top:262.5px;font-size:12px;color:#12a07a;text-align:center;"><span>01</span></div>
<div class="t" style="left:730px;width:34px;top:262.5px;font-size:12px;color:#12a07a;text-align:center;"><span>13</span></div>
<div class="t" style="left:765px;width:24px;top:262.5px;font-size:12px;color:#12a07a;text-align:center;"><span>01</span></div>
<div class="t" style="left:790px;width:39px;top:262.5px;font-size:12px;color:#12a07a;text-align:center;"><span>01</span></div>
<div class="t" style="left:830px;width:34px;top:262.5px;font-size:12px;color:#12a07a;text-align:center;"><span>77</span></div>
<div class="a" style="left:868px;top:251px"><svg width="13" height="13" viewBox="0 0 13 13" style="display:block"><rect x="0" y="0" width="13" height="13" rx="2.5" fill="#c4c4c4"/><path d="M3.6 6.6 L5.7 8.6 L9.5 4.7" stroke="#fff" stroke-width="1" fill="none"/></svg></div>
<div class="t" style="left:890px;width:24px;top:262.5px;font-size:12px;color:#12a07a;text-align:center;"><span>01</span></div>
<div class="t" style="left:915px;width:39px;top:262.5px;font-size:12px;color:#12a07a;text-align:center;"><span>04</span></div>
<div class="t" style="left:955px;width:34px;top:262.5px;font-size:12px;color:#12a07a;text-align:center;"><span>77</span></div>
<div class="a" style="left:993px;top:251px"><svg width="13" height="13" viewBox="0 0 13 13" style="display:block"><rect x="0" y="0" width="13" height="13" rx="2.5" fill="#c4c4c4"/><path d="M3.6 6.6 L5.7 8.6 L9.5 4.7" stroke="#fff" stroke-width="1" fill="none"/></svg></div>
<div class="t" style="left:1015px;width:24px;top:262.5px;font-size:12px;color:#12a07a;text-align:center;"><span>01</span></div>
<div class="t" style="left:1040px;width:39px;top:262.5px;font-size:12px;color:#12a07a;text-align:center;"><span>04</span></div>
<div class="a" style="left:1086px;top:251px"><svg width="13" height="13" viewBox="0 0 13 13" style="display:block"><rect x="0" y="0" width="13" height="13" rx="2.5" fill="#c4c4c4"/><path d="M3.6 6.6 L5.7 8.6 L9.5 4.7" stroke="#fff" stroke-width="1" fill="none"/></svg></div>
<div class="a" style="left:1136px;top:251px"><svg width="13" height="13" viewBox="0 0 13 13" style="display:block"><rect x="0" y="0" width="13" height="13" rx="2.5" fill="#c4c4c4"/><path d="M3.6 6.6 L5.7 8.6 L9.5 4.7" stroke="#fff" stroke-width="1" fill="none"/></svg></div>
<div class="t" style="left:25px;width:29px;top:285.5px;font-size:12px;color:#12a07a;text-align:center;"><span>014</span></div>
<div class="t" style="left:59px;top:285.5px;font-size:12px;color:#12a07a;font-style:italic;letter-spacing:0.22px;"><span>Geo</span></div>
<div class="t" style="left:119px;top:285.5px;font-size:12px;color:#12a07a;font-style:italic;letter-spacing:0.22px;"><span>Geographie</span></div>
<div class="a" style="left:271px;top:274px"><svg width="13" height="13" viewBox="0 0 13 13" style="display:block"><rect x="0" y="0" width="13" height="13" rx="2.5" fill="#c4c4c4"/><path d="M3.6 6.6 L5.7 8.6 L9.5 4.7" stroke="#fff" stroke-width="1" fill="none"/></svg></div>
<div class="t" style="left:294px;top:285.5px;font-size:12px;color:#12a07a;font-style:italic;letter-spacing:0.22px;"><span>Geographie</span></div>
<div class="t" style="left:444px;top:285.5px;font-size:12px;color:#12a07a;font-style:italic;letter-spacing:0.22px;"><span>Geo</span></div>
<div class="t" style="left:504px;top:285.5px;font-size:12px;color:#12a07a;font-style:italic;letter-spacing:0.22px;"><span>Geo</span></div>
<div class="t" style="left:560px;width:34px;top:285.5px;font-size:12px;color:#12a07a;text-align:center;"><span>014</span></div>
<div class="t" style="left:595px;width:34px;top:285.5px;font-size:12px;color:#12a07a;text-align:center;"><span>010</span></div>
<div class="t" style="left:630px;width:34px;top:285.5px;font-size:12px;color:#12a07a;text-align:center;"><span>12</span></div>
<div class="t" style="left:665px;width:24px;top:285.5px;font-size:12px;color:#12a07a;text-align:center;"><span>01</span></div>
<div class="t" style="left:690px;width:39px;top:285.5px;font-size:12px;color:#12a07a;text-align:center;"><span>01</span></div>
<div class="t" style="left:730px;width:34px;top:285.5px;font-size:12px;color:#12a07a;text-align:center;"><span>12</span></div>
<div class="t" style="left:765px;width:24px;top:285.5px;font-size:12px;color:#12a07a;text-align:center;"><span>01</span></div>
<div class="t" style="left:790px;width:39px;top:285.5px;font-size:12px;color:#12a07a;text-align:center;"><span>01</span></div>
<div class="t" style="left:830px;width:34px;top:285.5px;font-size:12px;color:#12a07a;text-align:center;"><span>47</span></div>
<div class="a" style="left:868px;top:274px"><svg width="13" height="13" viewBox="0 0 13 13" style="display:block"><rect x="0" y="0" width="13" height="13" rx="2.5" fill="#c4c4c4"/><path d="M3.6 6.6 L5.7 8.6 L9.5 4.7" stroke="#fff" stroke-width="1" fill="none"/></svg></div>
<div class="t" style="left:890px;width:24px;top:285.5px;font-size:12px;color:#12a07a;text-align:center;"><span>01</span></div>
<div class="t" style="left:915px;width:39px;top:285.5px;font-size:12px;color:#12a07a;text-align:center;"><span>03</span></div>
<div class="t" style="left:955px;width:34px;top:285.5px;font-size:12px;color:#12a07a;text-align:center;"><span>78</span></div>
<div class="a" style="left:993px;top:274px"><svg width="13" height="13" viewBox="0 0 13 13" style="display:block"><rect x="0" y="0" width="13" height="13" rx="2.5" fill="#c4c4c4"/><path d="M3.6 6.6 L5.7 8.6 L9.5 4.7" stroke="#fff" stroke-width="1" fill="none"/></svg></div>
<div class="t" style="left:1015px;width:24px;top:285.5px;font-size:12px;color:#12a07a;text-align:center;"><span>01</span></div>
<div class="t" style="left:1040px;width:39px;top:285.5px;font-size:12px;color:#12a07a;text-align:center;"><span>04</span></div>
<div class="a" style="left:1086px;top:274px"><svg width="13" height="13" viewBox="0 0 13 13" style="display:block"><rect x="0" y="0" width="13" height="13" rx="2.5" fill="#c4c4c4"/><path d="M3.6 6.6 L5.7 8.6 L9.5 4.7" stroke="#fff" stroke-width="1" fill="none"/></svg></div>
<div class="a" style="left:1136px;top:274px"><svg width="13" height="13" viewBox="0 0 13 13" style="display:block"><rect x="0" y="0" width="13" height="13" rx="2.5" fill="#c4c4c4"/><path d="M3.6 6.6 L5.7 8.6 L9.5 4.7" stroke="#fff" stroke-width="1" fill="none"/></svg></div>
<div class="t" style="left:25px;width:29px;top:308.5px;font-size:12px;color:#12a07a;text-align:center;"><span>015</span></div>
<div class="t" style="left:59px;top:308.5px;font-size:12px;color:#12a07a;font-style:italic;letter-spacing:0.22px;"><span>Gk</span></div>
<div class="t" style="left:119px;top:308.5px;font-size:12px;color:#12a07a;font-style:italic;letter-spacing:0.22px;"><span>Gemeinschaftskunde</span></div>
<div class="a" style="left:271px;top:297px"><svg width="13" height="13" viewBox="0 0 13 13" style="display:block"><rect x="0" y="0" width="13" height="13" rx="2.5" fill="#c4c4c4"/><path d="M3.6 6.6 L5.7 8.6 L9.5 4.7" stroke="#fff" stroke-width="1" fill="none"/></svg></div>
<div class="t" style="left:294px;top:308.5px;font-size:12px;color:#12a07a;font-style:italic;letter-spacing:0.22px;"><span>Gemeinschaftskunde</span></div>
<div class="t" style="left:444px;top:308.5px;font-size:12px;color:#12a07a;font-style:italic;letter-spacing:0.22px;"><span>Gk</span></div>
<div class="t" style="left:504px;top:308.5px;font-size:12px;color:#12a07a;font-style:italic;letter-spacing:0.22px;"><span>Gk</span></div>
<div class="t" style="left:560px;width:34px;top:308.5px;font-size:12px;color:#12a07a;text-align:center;"><span>015</span></div>
<div class="t" style="left:595px;width:34px;top:308.5px;font-size:12px;color:#12a07a;text-align:center;"><span>011</span></div>
<div class="t" style="left:630px;width:34px;top:308.5px;font-size:12px;color:#12a07a;text-align:center;"><span>01</span></div>
<div class="t" style="left:665px;width:24px;top:308.5px;font-size:12px;color:#12a07a;text-align:center;"><span>01</span></div>
<div class="t" style="left:690px;width:39px;top:308.5px;font-size:12px;color:#12a07a;text-align:center;"><span>01</span></div>
<div class="t" style="left:730px;width:34px;top:308.5px;font-size:12px;color:#12a07a;text-align:center;"><span>01</span></div>
<div class="t" style="left:765px;width:24px;top:308.5px;font-size:12px;color:#12a07a;text-align:center;"><span>01</span></div>
<div class="t" style="left:790px;width:39px;top:308.5px;font-size:12px;color:#12a07a;text-align:center;"><span>01</span></div>
<div class="t" style="left:830px;width:34px;top:308.5px;font-size:12px;color:#12a07a;text-align:center;"><span>89</span></div>
<div class="a" style="left:868px;top:297px"><svg width="13" height="13" viewBox="0 0 13 13" style="display:block"><rect x="0" y="0" width="13" height="13" rx="2.5" fill="#c4c4c4"/><path d="M3.6 6.6 L5.7 8.6 L9.5 4.7" stroke="#fff" stroke-width="1" fill="none"/></svg></div>
<div class="t" style="left:890px;width:24px;top:308.5px;font-size:12px;color:#12a07a;text-align:center;"><span>02</span></div>
<div class="t" style="left:915px;width:39px;top:308.5px;font-size:12px;color:#12a07a;text-align:center;"><span>04</span></div>
<div class="t" style="left:955px;width:34px;top:308.5px;font-size:12px;color:#12a07a;text-align:center;"><span>51</span></div>
<div class="a" style="left:993px;top:297px"><svg width="13" height="13" viewBox="0 0 13 13" style="display:block"><rect x="0" y="0" width="13" height="13" rx="2.5" fill="#c4c4c4"/><path d="M3.6 6.6 L5.7 8.6 L9.5 4.7" stroke="#fff" stroke-width="1" fill="none"/></svg></div>
<div class="t" style="left:1015px;width:24px;top:308.5px;font-size:12px;color:#12a07a;text-align:center;"><span>01</span></div>
<div class="t" style="left:1040px;width:39px;top:308.5px;font-size:12px;color:#12a07a;text-align:center;"><span>03</span></div>
<div class="a" style="left:1086px;top:297px"><svg width="13" height="13" viewBox="0 0 13 13" style="display:block"><rect x="0" y="0" width="13" height="13" rx="2.5" fill="#c4c4c4"/><path d="M3.6 6.6 L5.7 8.6 L9.5 4.7" stroke="#fff" stroke-width="1" fill="none"/></svg></div>
<div class="a" style="left:1136px;top:297px"><svg width="13" height="13" viewBox="0 0 13 13" style="display:block"><rect x="0" y="0" width="13" height="13" rx="2.5" fill="#c4c4c4"/><path d="M3.6 6.6 L5.7 8.6 L9.5 4.7" stroke="#fff" stroke-width="1" fill="none"/></svg></div>
<div class="t" style="left:25px;width:29px;top:331.5px;font-size:12px;color:#12a07a;text-align:center;"><span>023</span></div>
<div class="t" style="left:58.4px;top:331.5px;font-size:12px;color:#12a07a;"><span>Wi</span></div>
<div class="t" style="left:118.4px;top:331.5px;font-size:12px;color:#12a07a;"><span>Wirtschaft</span></div>
<div class="a" style="left:271px;top:320px"><svg width="13" height="13" viewBox="0 0 13 13" style="display:block"><rect x="0" y="0" width="13" height="13" rx="2.5" fill="#c4c4c4"/><path d="M3.6 6.6 L5.7 8.6 L9.5 4.7" stroke="#fff" stroke-width="1" fill="none"/></svg></div>
<div class="t" style="left:293.4px;top:331.5px;font-size:12px;color:#12a07a;"><span>Wirtschaft</span></div>
<div class="t" style="left:443.4px;top:331.5px;font-size:12px;color:#12a07a;"><span>Wi</span></div>
<div class="t" style="left:503.4px;top:331.5px;font-size:12px;color:#12a07a;"><span>Wi</span></div>
<div class="t" style="left:560px;width:34px;top:331.5px;font-size:12px;color:#12a07a;text-align:center;"><span>025</span></div>
<div class="t" style="left:595px;width:34px;top:331.5px;font-size:12px;color:#12a07a;text-align:center;"><span>012</span></div>
<div class="t" style="left:630px;width:34px;top:331.5px;font-size:12px;color:#12a07a;text-align:center;"><span>14</span></div>
<div class="t" style="left:665px;width:24px;top:331.5px;font-size:12px;color:#12a07a;text-align:center;"><span>01</span></div>
<div class="t" style="left:690px;width:39px;top:331.5px;font-size:12px;color:#12a07a;text-align:center;"><span>01</span></div>
<div class="t" style="left:730px;width:34px;top:331.5px;font-size:12px;color:#12a07a;text-align:center;"><span>14</span></div>
<div class="t" style="left:765px;width:24px;top:331.5px;font-size:12px;color:#12a07a;text-align:center;"><span>01</span></div>
<div class="t" style="left:790px;width:39px;top:331.5px;font-size:12px;color:#12a07a;text-align:center;"><span>01</span></div>
<div class="t" style="left:830px;width:34px;top:331.5px;font-size:12px;color:#000;text-align:center;"><span>-</span></div>
<div class="t" style="left:869px;top:331.5px;font-size:12px;color:#000;"><span>-</span></div>
<div class="t" style="left:890px;width:24px;top:331.5px;font-size:12px;color:#000;text-align:center;"><span>-</span></div>
<div class="t" style="left:915px;width:39px;top:331.5px;font-size:12px;color:#000;text-align:center;"><span>-</span></div>
<div class="t" style="left:955px;width:34px;top:331.5px;font-size:12px;color:#000;text-align:center;"><span>-</span></div>
<div class="t" style="left:994px;top:331.5px;font-size:12px;color:#000;"><span>-</span></div>
<div class="t" style="left:1015px;width:24px;top:331.5px;font-size:12px;color:#000;text-align:center;"><span>-</span></div>
<div class="t" style="left:1040px;width:39px;top:331.5px;font-size:12px;color:#000;text-align:center;"><span>-</span></div>
<div class="t" style="left:25px;width:29px;top:354.5px;font-size:12px;color:#12a07a;text-align:center;"><span>016</span></div>
<div class="t" style="left:59px;top:354.5px;font-size:12px;color:#12a07a;font-style:italic;letter-spacing:0.22px;"><span>Rel</span></div>
<div class="t" style="left:119px;top:354.5px;font-size:12px;color:#12a07a;font-style:italic;letter-spacing:0.22px;"><span>Religionslehre</span></div>
<div class="a" style="left:271px;top:343px"><svg width="13" height="13" viewBox="0 0 13 13" style="display:block"><rect x="0" y="0" width="13" height="13" rx="2.5" fill="#c4c4c4"/><path d="M3.6 6.6 L5.7 8.6 L9.5 4.7" stroke="#fff" stroke-width="1" fill="none"/></svg></div>
<div class="t" style="left:294px;top:354.5px;font-size:12px;color:#12a07a;font-style:italic;letter-spacing:0.22px;"><span>Religionslehre</span></div>
<div class="t" style="left:444px;top:354.5px;font-size:12px;color:#12a07a;font-style:italic;letter-spacing:0.22px;"><span>Rel</span></div>
<div class="t" style="left:504px;top:354.5px;font-size:12px;color:#12a07a;font-style:italic;letter-spacing:0.22px;"><span>Rel</span></div>
<div class="t" style="left:560px;width:34px;top:354.5px;font-size:12px;color:#12a07a;text-align:center;"><span>016</span></div>
<div class="t" style="left:595px;width:34px;top:354.5px;font-size:12px;color:#12a07a;text-align:center;"><span>013</span></div>
<div class="t" style="left:630px;width:34px;top:354.5px;font-size:12px;color:#000;text-align:center;"><span>-</span></div>
<div class="t" style="left:665px;width:24px;top:354.5px;font-size:12px;color:#000;text-align:center;"><span>-</span></div>
<div class="t" style="left:690px;width:39px;top:354.5px;font-size:12px;color:#12a07a;text-align:center;"><span>00</span></div>
<div class="t" style="left:730px;width:34px;top:354.5px;font-size:12px;color:#000;text-align:center;"><span>-</span></div>
<div class="t" style="left:765px;width:24px;top:354.5px;font-size:12px;color:#000;text-align:center;"><span>-</span></div>
<div class="t" style="left:790px;width:39px;top:354.5px;font-size:12px;color:#12a07a;text-align:center;"><span>00</span></div>
<div class="t" style="left:830px;width:34px;top:354.5px;font-size:12px;color:#12a07a;text-align:center;"><span>73</span></div>
<div class="a" style="left:868px;top:343px"><svg width="13" height="13" viewBox="0 0 13 13" style="display:block"><rect x="0" y="0" width="13" height="13" rx="2.5" fill="#c4c4c4"/><path d="M3.6 6.6 L5.7 8.6 L9.5 4.7" stroke="#fff" stroke-width="1" fill="none"/></svg></div>
<div class="t" style="left:890px;width:24px;top:354.5px;font-size:12px;color:#12a07a;text-align:center;"><span>01</span></div>
<div class="t" style="left:915px;width:39px;top:354.5px;font-size:12px;color:#12a07a;text-align:center;"><span>03</span></div>
<div class="t" style="left:955px;width:34px;top:354.5px;font-size:12px;color:#12a07a;text-align:center;"><span>73</span></div>
<div class="a" style="left:993px;top:343px"><svg width="13" height="13" viewBox="0 0 13 13" style="display:block"><rect x="0" y="0" width="13" height="13" rx="2.5" fill="#c4c4c4"/><path d="M3.6 6.6 L5.7 8.6 L9.5 4.7" stroke="#fff" stroke-width="1" fill="none"/></svg></div>
<div class="t" style="left:1015px;width:24px;top:354.5px;font-size:12px;color:#12a07a;text-align:center;"><span>01</span></div>
<div class="t" style="left:1040px;width:39px;top:354.5px;font-size:12px;color:#12a07a;text-align:center;"><span>03</span></div>
<div class="a" style="left:1136px;top:343px"><svg width="13" height="13" viewBox="0 0 13 13" style="display:block"><rect x="0" y="0" width="13" height="13" rx="2.5" fill="#c4c4c4"/><path d="M3.6 6.6 L5.7 8.6 L9.5 4.7" stroke="#fff" stroke-width="1" fill="none"/></svg></div>
<div class="t" style="left:25px;width:29px;top:377.5px;font-size:12px;color:#12a07a;text-align:center;"><span>017</span></div>
<div class="t" style="left:59px;top:377.5px;font-size:12px;color:#12a07a;font-style:italic;letter-spacing:0.22px;"><span>Eth</span></div>
<div class="t" style="left:119px;top:377.5px;font-size:12px;color:#12a07a;font-style:italic;letter-spacing:0.22px;"><span>Ethik</span></div>
<div class="a" style="left:271px;top:366px"><svg width="13" height="13" viewBox="0 0 13 13" style="display:block"><rect x="0" y="0" width="13" height="13" rx="2.5" fill="#c4c4c4"/><path d="M3.6 6.6 L5.7 8.6 L9.5 4.7" stroke="#fff" stroke-width="1" fill="none"/></svg></div>
<div class="t" style="left:294px;top:377.5px;font-size:12px;color:#12a07a;font-style:italic;letter-spacing:0.22px;"><span>Ethik</span></div>
<div class="t" style="left:444px;top:377.5px;font-size:12px;color:#12a07a;font-style:italic;letter-spacing:0.22px;"><span>Eth</span></div>
<div class="t" style="left:504px;top:377.5px;font-size:12px;color:#12a07a;font-style:italic;letter-spacing:0.22px;"><span>Eth</span></div>
<div class="t" style="left:560px;width:34px;top:377.5px;font-size:12px;color:#12a07a;text-align:center;"><span>017</span></div>
<div class="t" style="left:595px;width:34px;top:377.5px;font-size:12px;color:#12a07a;text-align:center;"><span>014</span></div>
<div class="t" style="left:630px;width:34px;top:377.5px;font-size:12px;color:#000;text-align:center;"><span>-</span></div>
<div class="t" style="left:665px;width:24px;top:377.5px;font-size:12px;color:#000;text-align:center;"><span>-</span></div>
<div class="t" style="left:690px;width:39px;top:377.5px;font-size:12px;color:#12a07a;text-align:center;"><span>00</span></div>
<div class="t" style="left:730px;width:34px;top:377.5px;font-size:12px;color:#000;text-align:center;"><span>-</span></div>
<div class="t" style="left:765px;width:24px;top:377.5px;font-size:12px;color:#000;text-align:center;"><span>-</span></div>
<div class="t" style="left:790px;width:39px;top:377.5px;font-size:12px;color:#12a07a;text-align:center;"><span>00</span></div>
<div class="t" style="left:830px;width:34px;top:377.5px;font-size:12px;color:#12a07a;text-align:center;"><span>15</span></div>
<div class="a" style="left:868px;top:366px"><svg width="13" height="13" viewBox="0 0 13 13" style="display:block"><rect x="0" y="0" width="13" height="13" rx="2.5" fill="#c4c4c4"/><path d="M3.6 6.6 L5.7 8.6 L9.5 4.7" stroke="#fff" stroke-width="1" fill="none"/></svg></div>
<div class="t" style="left:890px;width:24px;top:377.5px;font-size:12px;color:#12a07a;text-align:center;"><span>01</span></div>
<div class="t" style="left:915px;width:39px;top:377.5px;font-size:12px;color:#12a07a;text-align:center;"><span>01</span></div>
<div class="t" style="left:955px;width:34px;top:377.5px;font-size:12px;color:#12a07a;text-align:center;"><span>15</span></div>
<div class="a" style="left:993px;top:366px"><svg width="13" height="13" viewBox="0 0 13 13" style="display:block"><rect x="0" y="0" width="13" height="13" rx="2.5" fill="#c4c4c4"/><path d="M3.6 6.6 L5.7 8.6 L9.5 4.7" stroke="#fff" stroke-width="1" fill="none"/></svg></div>
<div class="t" style="left:1015px;width:24px;top:377.5px;font-size:12px;color:#12a07a;text-align:center;"><span>01</span></div>
<div class="t" style="left:1040px;width:39px;top:377.5px;font-size:12px;color:#12a07a;text-align:center;"><span>01</span></div>
<div class="a" style="left:1136px;top:366px"><svg width="13" height="13" viewBox="0 0 13 13" style="display:block"><rect x="0" y="0" width="13" height="13" rx="2.5" fill="#c4c4c4"/><path d="M3.6 6.6 L5.7 8.6 L9.5 4.7" stroke="#fff" stroke-width="1" fill="none"/></svg></div>
<div class="t" style="left:25px;width:29px;top:400.5px;font-size:12px;color:#12a07a;text-align:center;"><span>018</span></div>
<div class="t" style="left:59px;top:400.5px;font-size:12px;color:#12a07a;font-style:italic;letter-spacing:0.22px;"><span>M</span></div>
<div class="t" style="left:119px;top:400.5px;font-size:12px;color:#12a07a;font-style:italic;letter-spacing:0.22px;"><span>Mathematik</span></div>
<div class="a" style="left:271px;top:389px"><svg width="13" height="13" viewBox="0 0 13 13" style="display:block"><rect x="0" y="0" width="13" height="13" rx="2.5" fill="#c4c4c4"/><path d="M3.6 6.6 L5.7 8.6 L9.5 4.7" stroke="#fff" stroke-width="1" fill="none"/></svg></div>
<div class="t" style="left:294px;top:400.5px;font-size:12px;color:#12a07a;font-style:italic;letter-spacing:0.22px;"><span>Mathematik</span></div>
<div class="t" style="left:444px;top:400.5px;font-size:12px;color:#12a07a;font-style:italic;letter-spacing:0.22px;"><span>M</span></div>
<div class="t" style="left:504px;top:400.5px;font-size:12px;color:#12a07a;font-style:italic;letter-spacing:0.22px;"><span>M</span></div>
<div class="t" style="left:560px;width:34px;top:400.5px;font-size:12px;color:#12a07a;text-align:center;"><span>018</span></div>
<div class="t" style="left:595px;width:34px;top:400.5px;font-size:12px;color:#12a07a;text-align:center;"><span>015</span></div>
<div class="t" style="left:630px;width:34px;top:400.5px;font-size:12px;color:#12a07a;text-align:center;"><span>78</span></div>
<div class="t" style="left:665px;width:24px;top:400.5px;font-size:12px;color:#12a07a;text-align:center;"><span>03</span></div>
<div class="t" style="left:690px;width:39px;top:400.5px;font-size:12px;color:#12a07a;text-align:center;"><span>04</span></div>
<div class="t" style="left:730px;width:34px;top:400.5px;font-size:12px;color:#12a07a;text-align:center;"><span>78</span></div>
<div class="t" style="left:765px;width:24px;top:400.5px;font-size:12px;color:#12a07a;text-align:center;"><span>04</span></div>
<div class="t" style="left:790px;width:39px;top:400.5px;font-size:12px;color:#12a07a;text-align:center;"><span>04</span></div>
<div class="t" style="left:830px;width:34px;top:400.5px;font-size:12px;color:#12a07a;text-align:center;"><span>10</span></div>
<div class="a" style="left:868px;top:389px"><svg width="13" height="13" viewBox="0 0 13 13" style="display:block"><rect x="0" y="0" width="13" height="13" rx="2.5" fill="#c4c4c4"/><path d="M3.6 6.6 L5.7 8.6 L9.5 4.7" stroke="#fff" stroke-width="1" fill="none"/></svg></div>
<div class="t" style="left:890px;width:24px;top:400.5px;font-size:12px;color:#12a07a;text-align:center;"><span>01</span></div>
<div class="t" style="left:915px;width:39px;top:400.5px;font-size:12px;color:#12a07a;text-align:center;"><span>01</span></div>
<div class="t" style="left:955px;width:34px;top:400.5px;font-size:12px;color:#12a07a;text-align:center;"><span>10</span></div>
<div class="a" style="left:993px;top:389px"><svg width="13" height="13" viewBox="0 0 13 13" style="display:block"><rect x="0" y="0" width="13" height="13" rx="2.5" fill="#c4c4c4"/><path d="M3.6 6.6 L5.7 8.6 L9.5 4.7" stroke="#fff" stroke-width="1" fill="none"/></svg></div>
<div class="t" style="left:1015px;width:24px;top:400.5px;font-size:12px;color:#12a07a;text-align:center;"><span>01</span></div>
<div class="t" style="left:1040px;width:39px;top:400.5px;font-size:12px;color:#12a07a;text-align:center;"><span>01</span></div>
<div class="a" style="left:1086px;top:389px"><svg width="13" height="13" viewBox="0 0 13 13" style="display:block"><rect x="0" y="0" width="13" height="13" rx="2.5" fill="#c4c4c4"/><path d="M3.6 6.6 L5.7 8.6 L9.5 4.7" stroke="#fff" stroke-width="1" fill="none"/></svg></div>
<div class="a" style="left:1136px;top:389px"><svg width="13" height="13" viewBox="0 0 13 13" style="display:block"><rect x="0" y="0" width="13" height="13" rx="2.5" fill="#c4c4c4"/><path d="M3.6 6.6 L5.7 8.6 L9.5 4.7" stroke="#fff" stroke-width="1" fill="none"/></svg></div>
<div class="t" style="left:25px;width:29px;top:423.5px;font-size:12px;color:#12a07a;text-align:center;"><span>019</span></div>
<div class="t" style="left:59px;top:423.5px;font-size:12px;color:#12a07a;font-style:italic;letter-spacing:0.22px;"><span>Ph</span></div>
<div class="t" style="left:119px;top:423.5px;font-size:12px;color:#12a07a;font-style:italic;letter-spacing:0.22px;"><span>Physik</span></div>
<div class="a" style="left:271px;top:412px"><svg width="13" height="13" viewBox="0 0 13 13" style="display:block"><rect x="0" y="0" width="13" height="13" rx="2.5" fill="#c4c4c4"/><path d="M3.6 6.6 L5.7 8.6 L9.5 4.7" stroke="#fff" stroke-width="1" fill="none"/></svg></div>
<div class="t" style="left:294px;top:423.5px;font-size:12px;color:#12a07a;font-style:italic;letter-spacing:0.22px;"><span>Physik</span></div>
<div class="t" style="left:444px;top:423.5px;font-size:12px;color:#12a07a;font-style:italic;letter-spacing:0.22px;"><span>Ph</span></div>
<div class="t" style="left:504px;top:423.5px;font-size:12px;color:#12a07a;font-style:italic;letter-spacing:0.22px;"><span>Ph</span></div>
<div class="t" style="left:560px;width:34px;top:423.5px;font-size:12px;color:#12a07a;text-align:center;"><span>019</span></div>
<div class="t" style="left:595px;width:34px;top:423.5px;font-size:12px;color:#12a07a;text-align:center;"><span>016</span></div>
<div class="t" style="left:630px;width:34px;top:423.5px;font-size:12px;color:#12a07a;text-align:center;"><span>28</span></div>
<div class="t" style="left:665px;width:24px;top:423.5px;font-size:12px;color:#12a07a;text-align:center;"><span>01</span></div>
<div class="t" style="left:690px;width:39px;top:423.5px;font-size:12px;color:#12a07a;text-align:center;"><span>02</span></div>
<div class="t" style="left:730px;width:34px;top:423.5px;font-size:12px;color:#12a07a;text-align:center;"><span>28</span></div>
<div class="t" style="left:765px;width:24px;top:423.5px;font-size:12px;color:#12a07a;text-align:center;"><span>01</span></div>
<div class="t" style="left:790px;width:39px;top:423.5px;font-size:12px;color:#12a07a;text-align:center;"><span>02</span></div>
<div class="t" style="left:830px;width:34px;top:423.5px;font-size:12px;color:#12a07a;text-align:center;"><span>27</span></div>
<div class="a" style="left:868px;top:412px"><svg width="13" height="13" viewBox="0 0 13 13" style="display:block"><rect x="0" y="0" width="13" height="13" rx="2.5" fill="#c4c4c4"/><path d="M3.6 6.6 L5.7 8.6 L9.5 4.7" stroke="#fff" stroke-width="1" fill="none"/></svg></div>
<div class="t" style="left:890px;width:24px;top:423.5px;font-size:12px;color:#12a07a;text-align:center;"><span>01</span></div>
<div class="t" style="left:915px;width:39px;top:423.5px;font-size:12px;color:#12a07a;text-align:center;"><span>02</span></div>
<div class="t" style="left:955px;width:34px;top:423.5px;font-size:12px;color:#12a07a;text-align:center;"><span>26</span></div>
<div class="a" style="left:993px;top:412px"><svg width="13" height="13" viewBox="0 0 13 13" style="display:block"><rect x="0" y="0" width="13" height="13" rx="2.5" fill="#c4c4c4"/><path d="M3.6 6.6 L5.7 8.6 L9.5 4.7" stroke="#fff" stroke-width="1" fill="none"/></svg></div>
<div class="t" style="left:1015px;width:24px;top:423.5px;font-size:12px;color:#12a07a;text-align:center;"><span>01</span></div>
<div class="t" style="left:1040px;width:39px;top:423.5px;font-size:12px;color:#12a07a;text-align:center;"><span>02</span></div>
<div class="a" style="left:1086px;top:412px"><svg width="13" height="13" viewBox="0 0 13 13" style="display:block"><rect x="0" y="0" width="13" height="13" rx="2.5" fill="#c4c4c4"/><path d="M3.6 6.6 L5.7 8.6 L9.5 4.7" stroke="#fff" stroke-width="1" fill="none"/></svg></div>
<div class="a" style="left:1136px;top:412px"><svg width="13" height="13" viewBox="0 0 13 13" style="display:block"><rect x="0" y="0" width="13" height="13" rx="2.5" fill="#c4c4c4"/><path d="M3.6 6.6 L5.7 8.6 L9.5 4.7" stroke="#fff" stroke-width="1" fill="none"/></svg></div>
<div class="a" style="left:9px;top:421px;width:1181px;height:1px;background:#c8c8c8;"></div>
<div class="a" style="left:9px;top:422px;width:1181px;height:7px;background:#ebebeb;"></div>
<div class="a" style="left:9px;top:429px;width:1181px;height:16px;background:#f4f4f4;"></div>
<div class="a" style="left:9px;top:445px;width:1182px;height:9px;background:#fff;border-radius:0 0 4px 0"></div>
<div class="t" style="left:58.5px;top:217.5px;font-size:11px;color:#000;"><span>wprKurzZ</span></div>
<div class="t" style="left:118.3px;top:217.5px;font-size:11px;color:#000;"><span>Fachname</span></div>
<div class="t" style="left:293.3px;top:217.5px;font-size:11px;color:#000;"><span>Fachname (Zeugnis)</span></div>
<div class="t" style="left:443.3px;top:217.5px;font-size:11px;color:#000;"><span>SchKurzz</span></div>
<div class="t" style="left:502.8px;top:217.5px;font-size:11px;color:#000;"><span>ExpBez</span></div>
<div class="vt" style="left:34.5px;top:216.5px">physID</div>
<div class="vt" style="left:272.0px;top:216.5px">im JG-Kanon</div>
<div class="vt" style="left:572.0px;top:216.5px">FachVIndex</div>
<div class="vt" style="left:607.0px;top:216.5px">RF folgeID</div>
<div class="vt" style="left:642.0px;top:216.5px">SchZahl JG1L</div>
<div class="vt" style="left:672.0px;top:216.5px">PMin JG1L</div>
<div class="vt" style="left:704.5px;top:216.5px">Pakt JG1L</div>
<div class="vt" style="left:742.0px;top:216.5px">SchZahl JG2L</div>
<div class="vt" style="left:772.0px;top:216.5px">PMinJG2L</div>
<div class="vt" style="left:804.5px;top:216.5px">PaktJG2L</div>
<div class="vt" style="left:842.0px;top:216.5px">SchZahl JG1B</div>
<div class="vt" style="left:872.0px;top:216.5px">in JG1</div>
<div class="vt" style="left:897.0px;top:216.5px">PMin JG1B</div>
<div class="vt" style="left:929.5px;top:216.5px">Pakt JG1B</div>
<div class="vt" style="left:967.0px;top:216.5px">SchZahl JG2B</div>
<div class="vt" style="left:997.0px;top:216.5px">in JG2</div>
<div class="vt" style="left:1022.0px;top:216.5px">PMin JG2B</div>
<div class="vt" style="left:1054.5px;top:216.5px">Pakt JG2B</div>
<div class="vt" style="left:1087.0px;top:216.5px">mFach</div>
<div class="vt" style="left:1112.0px;top:216.5px">WahlF</div>
<div class="vt" style="left:1137.0px;top:216.5px">MiFach</div>
<div class="a" style="left:1198px;top:245px;width:2px;height:17px;background:#94ae90;"></div>
<div class="a" style="left:35px;top:428px;width:108px;height:21px;border:1px solid #e8e8e8;border-bottom:1px solid #8fae8c;background:#fff;border-radius:2px 2px 0 0"></div>
<div class="a" style="left:150px;top:427px;width:88px;height:21px;border:1px solid #c8c8c8;border-radius:3px;background:#f9f9f9"></div>
<svg class="a" style="left:162px;top:430px" width="16" height="16" viewBox="0 0 16 16"><defs><linearGradient id="cg162" x1="0" y1="0" x2="1" y2="1"><stop offset="0" stop-color="#ffffff"/><stop offset="0.5" stop-color="#c8c8c8"/><stop offset="1" stop-color="#8fae8a"/></linearGradient><linearGradient id="ci162" x1="0" y1="0" x2="0" y2="1"><stop offset="0" stop-color="#cfcfcf"/><stop offset="1" stop-color="#b6b2bc"/></linearGradient></defs><circle cx="8" cy="8" r="7.8" fill="url(#cg162)"/><circle cx="8" cy="8" r="6.2" fill="url(#ci162)"/><path d="M6.3 3 L9.7 3 L9.7 7 L12.6 7 L8 13.2 L3.4 7 L6.3 7 Z" fill="#fff"/></svg>
<div class="t" style="left:182.4px;top:441.2px;font-size:11.6px;color:#a0a0a0;"><span>vorwärts</span></div>
<div class="a" style="left:245px;top:427px;width:88px;height:21px;border:1px solid #c8c8c8;border-radius:3px;background:#f9f9f9"></div>
<svg class="a" style="left:254px;top:430px" width="16" height="16" viewBox="0 0 16 16"><defs><linearGradient id="cg254" x1="0" y1="0" x2="1" y2="1"><stop offset="0" stop-color="#ffffff"/><stop offset="0.5" stop-color="#c8c8c8"/><stop offset="1" stop-color="#8fae8a"/></linearGradient><linearGradient id="ci254" x1="0" y1="0" x2="0" y2="1"><stop offset="0" stop-color="#cfcfcf"/><stop offset="1" stop-color="#b6b2bc"/></linearGradient></defs><circle cx="8" cy="8" r="7.8" fill="url(#cg254)"/><circle cx="8" cy="8" r="6.2" fill="url(#ci254)"/><path d="M6.3 13 L9.7 13 L9.7 9 L12.6 9 L8 2.8 L3.4 9 L6.3 9 Z" fill="#fff"/></svg>
<div class="t" style="left:274.5px;top:441.2px;font-size:11.6px;color:#a0a0a0;"><span>rückwärts</span></div>
<div class="a" style="left:26px;top:461px;width:17px;height:2px;background:#8fae8c;"></div>
<div class="t" style="left:12.3px;top:493px;font-size:12.9px;color:#000;"><span>Fachname (Zeugnis): Fachname für Zeugnisse (ggf. gekürzt) nach Vorgabe des Ministeriums</span></div>
<div class="a" style="left:871px;top:508px;width:163px;height:27px;border:1px solid #bababa;background:#e5e5e5"></div>
<div class="t" style="left:871px;width:163px;top:526.3px;font-size:12px;text-align:center;color:#000;letter-spacing:0px"><span>Abbrechen</span></div>
<div class="a" style="left:1040px;top:508px;width:163px;height:27px;border:1px solid #bababa;background:#e5e5e5"></div>
<div class="t" style="left:1040px;width:163px;top:526.3px;font-size:12px;text-align:center;color:#000;letter-spacing:-0.2px"><span>Speichern und Schließen</span></div>
<div class="a" style="left:186px;top:29px;width:104px;height:33px;border:5px solid #12c312;border-radius:9px"></div>
<div class="a" style="left:6px;top:103px;width:80px;height:31px;border:5px solid #12c312;border-radius:9px"></div>
<div class="a" style="left:595px;top:60px;width:528px;height:27px;border:5px solid #ff0000;border-radius:7px"></div>
<div class="a" style="left:827px;top:267px;width:254px;height:50px;border:5px solid #ff0000;border-radius:7px"></div></body></html>
